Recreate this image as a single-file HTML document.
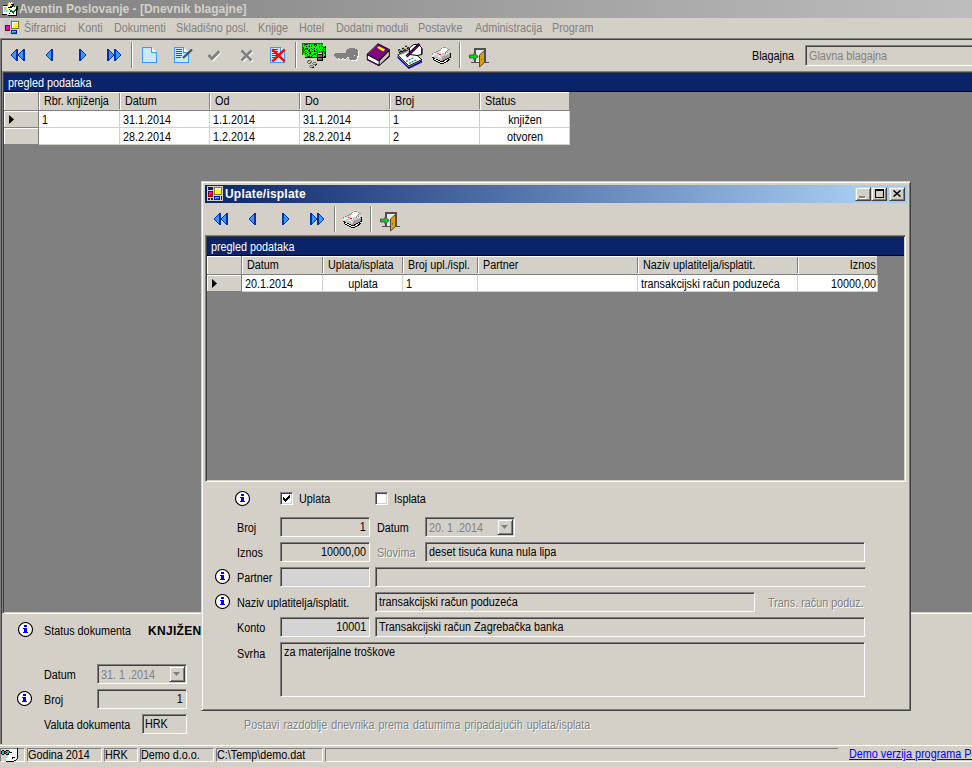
<!DOCTYPE html><html><head><meta charset="utf-8"><style>
html,body{margin:0;padding:0;}
body{width:972px;height:768px;overflow:hidden;position:relative;background:#d4d0c8;font-family:"Liberation Sans",sans-serif;}
body div, body svg{position:absolute;box-sizing:content-box;}
.t{white-space:nowrap;font-size:12px;line-height:13px;color:#000;transform:scaleX(0.9);transform-origin:0 0;}
.b{white-space:nowrap;font-size:12px;line-height:13px;font-weight:bold;color:#000;}
.r{transform-origin:100% 0;}
.c{transform-origin:50% 0;}
.e{color:#808080;text-shadow:1px 1px 0 #fff;}
</style></head><body>
<div style="left:0px;top:0px;width:972px;height:18px;background:linear-gradient(to right,#808080 0px,#c0c0c0 1018px);background-size:1018px 18px;background-repeat:no-repeat"></div>
<div class="b" style="left:19px;top:3px;color:#d4d0c8">Aventin Poslovanje - [Dnevnik blagajne]</div>
<div class="t" style="left:24px;top:22px;color:#808080">Šifrarnici</div>
<div class="t" style="left:78px;top:22px;color:#808080">Konti</div>
<div class="t" style="left:114px;top:22px;color:#808080">Dokumenti</div>
<div class="t" style="left:176px;top:22px;color:#808080">Skladišno posl.</div>
<div class="t" style="left:258px;top:22px;color:#808080">Knjige</div>
<div class="t" style="left:299px;top:22px;color:#808080">Hotel</div>
<div class="t" style="left:336px;top:22px;color:#808080">Dodatni moduli</div>
<div class="t" style="left:418px;top:22px;color:#808080">Postavke</div>
<div class="t" style="left:475px;top:22px;color:#808080">Administracija</div>
<div class="t" style="left:552px;top:22px;color:#808080">Program</div>
<div style="left:0px;top:38px;width:972px;height:1px;background:#808080"></div>
<div style="left:0px;top:39px;width:972px;height:1px;background:#404040"></div>
<div style="left:0px;top:38px;width:1px;height:707px;background:#808080"></div>
<div style="left:1px;top:39px;width:1px;height:706px;background:#404040"></div>
<div style="left:0px;top:744px;width:972px;height:1px;background:#d4d0c8"></div>
<div style="left:0px;top:745px;width:972px;height:1px;background:#ffffff"></div>
<div style="left:131px;top:42px;width:1px;height:26px;background:#808080"></div>
<div style="left:132px;top:42px;width:1px;height:26px;background:#ffffff"></div>
<div style="left:295px;top:42px;width:1px;height:26px;background:#808080"></div>
<div style="left:296px;top:42px;width:1px;height:26px;background:#ffffff"></div>
<div style="left:459px;top:42px;width:1px;height:26px;background:#808080"></div>
<div style="left:460px;top:42px;width:1px;height:26px;background:#ffffff"></div>
<div class="t" style="left:752px;top:50px;">Blagajna</div>
<div style="left:805px;top:45px;width:198px;height:19px;background:#d4d0c8;border:1px solid;border-color:#808080 #ffffff #ffffff #808080;box-shadow:inset 1px 1px #404040,inset -1px -1px #d4d0c8;"></div>
<div class="t" style="left:809px;top:50px;color:#808080">Glavna blagajna</div>
<div style="left:2px;top:71px;width:978px;height:541px;background:#808080;border:1px solid;border-color:#808080 #ffffff #ffffff #808080;box-shadow:inset 1px 1px #404040,inset -1px -1px #d4d0c8;"></div>
<div style="left:4px;top:73px;width:968px;height:18px;background:#0a246a"></div>
<div style="left:4px;top:91px;width:968px;height:1px;background:#000"></div>
<div class="t" style="left:8px;top:77px;color:#fff">pregled podataka</div>
<div style="left:4px;top:92px;width:34px;height:18px;background:#d4d0c8;border-top:1px solid #ffffff;border-left:1px solid #ffffff;box-sizing:border-box"></div>
<div style="left:38px;top:92px;width:1px;height:19px;background:#808080"></div>
<div style="left:4px;top:110px;width:566px;height:1px;background:#808080"></div>
<div style="left:39px;top:92px;width:81px;height:18px;background:#d4d0c8;border-top:1px solid #ffffff;border-left:1px solid #ffffff;box-sizing:border-box"></div>
<div style="left:119px;top:93px;width:1px;height:16px;background:#808080"></div>
<div class="t" style="left:44px;top:95px;">Rbr. knjiženja</div>
<div style="left:120px;top:92px;width:90px;height:18px;background:#d4d0c8;border-top:1px solid #ffffff;border-left:1px solid #ffffff;box-sizing:border-box"></div>
<div style="left:209px;top:93px;width:1px;height:16px;background:#808080"></div>
<div class="t" style="left:125px;top:95px;">Datum</div>
<div style="left:210px;top:92px;width:90px;height:18px;background:#d4d0c8;border-top:1px solid #ffffff;border-left:1px solid #ffffff;box-sizing:border-box"></div>
<div style="left:299px;top:93px;width:1px;height:16px;background:#808080"></div>
<div class="t" style="left:215px;top:95px;">Od</div>
<div style="left:300px;top:92px;width:90px;height:18px;background:#d4d0c8;border-top:1px solid #ffffff;border-left:1px solid #ffffff;box-sizing:border-box"></div>
<div style="left:389px;top:93px;width:1px;height:16px;background:#808080"></div>
<div class="t" style="left:305px;top:95px;">Do</div>
<div style="left:390px;top:92px;width:90px;height:18px;background:#d4d0c8;border-top:1px solid #ffffff;border-left:1px solid #ffffff;box-sizing:border-box"></div>
<div style="left:479px;top:93px;width:1px;height:16px;background:#808080"></div>
<div class="t" style="left:395px;top:95px;">Broj</div>
<div style="left:480px;top:92px;width:89px;height:18px;background:#d4d0c8;border-top:1px solid #ffffff;border-left:1px solid #ffffff;box-sizing:border-box"></div>
<div class="t" style="left:485px;top:95px;">Status</div>
<div style="left:4px;top:111px;width:34px;height:16px;background:#d4d0c8;border-top:1px solid #ffffff;border-left:1px solid #ffffff;box-sizing:border-box"></div>
<div style="left:38px;top:111px;width:1px;height:17px;background:#808080"></div>
<div style="left:4px;top:127px;width:35px;height:1px;background:#808080"></div>
<svg style="position:absolute;left:9px;top:115px" width="5" height="9" viewBox="0 0 5 9" shape-rendering="crispEdges"><path d="M0 0L5 4.5L0 9Z" fill="#000" shape-rendering="auto"/></svg>
<div style="left:39px;top:111px;width:531px;height:16px;background:#fff"></div>
<div style="left:39px;top:127px;width:531px;height:1px;background:#d4d0c8"></div>
<div style="left:119px;top:111px;width:1px;height:17px;background:#d4d0c8"></div>
<div class="t" style="left:42px;top:114px;">1</div>
<div style="left:209px;top:111px;width:1px;height:17px;background:#d4d0c8"></div>
<div class="t" style="left:123px;top:114px;">31.1.2014</div>
<div style="left:299px;top:111px;width:1px;height:17px;background:#d4d0c8"></div>
<div class="t" style="left:213px;top:114px;">1.1.2014</div>
<div style="left:389px;top:111px;width:1px;height:17px;background:#d4d0c8"></div>
<div class="t" style="left:303px;top:114px;">31.1.2014</div>
<div style="left:479px;top:111px;width:1px;height:17px;background:#d4d0c8"></div>
<div class="t" style="left:393px;top:114px;">1</div>
<div style="left:569px;top:111px;width:1px;height:17px;background:#d4d0c8"></div>
<div class="t c" style="left:424.5px;width:200px;top:114px;text-align:center;">knjižen</div>
<div style="left:4px;top:128px;width:34px;height:16px;background:#d4d0c8;border-top:1px solid #ffffff;border-left:1px solid #ffffff;box-sizing:border-box"></div>
<div style="left:38px;top:128px;width:1px;height:17px;background:#808080"></div>
<div style="left:4px;top:144px;width:35px;height:1px;background:#808080"></div>
<div style="left:39px;top:128px;width:531px;height:16px;background:#fff"></div>
<div style="left:39px;top:144px;width:531px;height:1px;background:#d4d0c8"></div>
<div style="left:119px;top:128px;width:1px;height:17px;background:#d4d0c8"></div>
<div style="left:209px;top:128px;width:1px;height:17px;background:#d4d0c8"></div>
<div class="t" style="left:123px;top:131px;">28.2.2014</div>
<div style="left:299px;top:128px;width:1px;height:17px;background:#d4d0c8"></div>
<div class="t" style="left:213px;top:131px;">1.2.2014</div>
<div style="left:389px;top:128px;width:1px;height:17px;background:#d4d0c8"></div>
<div class="t" style="left:303px;top:131px;">28.2.2014</div>
<div style="left:479px;top:128px;width:1px;height:17px;background:#d4d0c8"></div>
<div class="t" style="left:393px;top:131px;">2</div>
<div style="left:569px;top:128px;width:1px;height:17px;background:#d4d0c8"></div>
<div class="t c" style="left:424.5px;width:200px;top:131px;text-align:center;">otvoren</div>
<svg style="position:absolute;left:0px;top:0px" width="18" height="17" viewBox="0 0 18 17" shape-rendering="crispEdges"><rect x="9" y="2" width="1" height="1" fill="#ffff00"/><rect x="11" y="2" width="1" height="1" fill="#ffffff"/><rect x="8" y="3" width="2" height="1" fill="#ffff00"/><rect x="10" y="3" width="3" height="1" fill="#ffffff"/><rect x="8" y="4" width="1" height="1" fill="#ffff00"/><rect x="9" y="4" width="2" height="1" fill="#ffffff"/><rect x="11" y="4" width="3" height="1" fill="#000000"/><rect x="3" y="5" width="1" height="1" fill="#0000ff"/><rect x="4" y="5" width="1" height="1" fill="#000000"/><rect x="5" y="5" width="1" height="1" fill="#0000ff"/><rect x="6" y="5" width="1" height="1" fill="#000000"/><rect x="8" y="5" width="1" height="1" fill="#ffff00"/><rect x="9" y="5" width="3" height="1" fill="#ffffff"/><rect x="12" y="5" width="2" height="1" fill="#000000"/><rect x="3" y="6" width="7" height="1" fill="#ffffff"/><rect x="10" y="6" width="3" height="1" fill="#000000"/><rect x="14" y="6" width="1" height="1" fill="#008000"/><rect x="15" y="6" width="1" height="1" fill="#ffff00"/><rect x="16" y="6" width="1" height="1" fill="#008000"/><rect x="17" y="6" width="1" height="1" fill="#000000"/><rect x="3" y="7" width="1" height="1" fill="#ffffff"/><rect x="4" y="7" width="3" height="1" fill="#c0c0c0"/><rect x="7" y="7" width="1" height="1" fill="#ffffff"/><rect x="8" y="7" width="4" height="1" fill="#000000"/><rect x="12" y="7" width="4" height="1" fill="#ffffff"/><rect x="16" y="7" width="1" height="1" fill="#000000"/><rect x="17" y="7" width="1" height="1" fill="#c00000"/><rect x="3" y="8" width="1" height="1" fill="#ffffff"/><rect x="4" y="8" width="1" height="1" fill="#c0c0c0"/><rect x="5" y="8" width="1" height="1" fill="#00ffff"/><rect x="6" y="8" width="1" height="1" fill="#ffff00"/><rect x="7" y="8" width="9" height="1" fill="#ffffff"/><rect x="16" y="8" width="2" height="1" fill="#000000"/><rect x="3" y="9" width="1" height="1" fill="#ffffff"/><rect x="4" y="9" width="1" height="1" fill="#c0c0c0"/><rect x="5" y="9" width="1" height="1" fill="#00ffff"/><rect x="6" y="9" width="1" height="1" fill="#ffff00"/><rect x="7" y="9" width="2" height="1" fill="#ffffff"/><rect x="9" y="9" width="1" height="1" fill="#000000"/><rect x="10" y="9" width="5" height="1" fill="#ffffff"/><rect x="15" y="9" width="1" height="1" fill="#008000"/><rect x="16" y="9" width="2" height="1" fill="#000000"/><rect x="3" y="10" width="1" height="1" fill="#ffffff"/><rect x="4" y="10" width="1" height="1" fill="#c0c0c0"/><rect x="5" y="10" width="1" height="1" fill="#ffff00"/><rect x="6" y="10" width="1" height="1" fill="#00ffff"/><rect x="7" y="10" width="3" height="1" fill="#ffffff"/><rect x="10" y="10" width="2" height="1" fill="#008000"/><rect x="12" y="10" width="2" height="1" fill="#ffffff"/><rect x="14" y="10" width="2" height="1" fill="#008000"/><rect x="16" y="10" width="1" height="1" fill="#000000"/><rect x="3" y="11" width="1" height="1" fill="#ffffff"/><rect x="4" y="11" width="1" height="1" fill="#c0c0c0"/><rect x="5" y="11" width="1" height="1" fill="#ffff00"/><rect x="6" y="11" width="1" height="1" fill="#00ffff"/><rect x="7" y="11" width="3" height="1" fill="#ffffff"/><rect x="10" y="11" width="1" height="1" fill="#000000"/><rect x="11" y="11" width="4" height="1" fill="#008000"/><rect x="15" y="11" width="1" height="1" fill="#ffffff"/><rect x="16" y="11" width="1" height="1" fill="#000000"/><rect x="3" y="12" width="9" height="1" fill="#ffffff"/><rect x="12" y="12" width="2" height="1" fill="#008000"/><rect x="14" y="12" width="2" height="1" fill="#ffffff"/><rect x="16" y="12" width="1" height="1" fill="#000000"/><rect x="3" y="13" width="6" height="1" fill="#ffffff"/><rect x="9" y="13" width="1" height="1" fill="#000000"/><rect x="10" y="13" width="3" height="1" fill="#ffffff"/><rect x="13" y="13" width="1" height="1" fill="#008000"/><rect x="14" y="13" width="2" height="1" fill="#ffffff"/><rect x="16" y="13" width="1" height="1" fill="#000000"/><rect x="2" y="14" width="5" height="1" fill="#000000"/><rect x="7" y="14" width="9" height="1" fill="#ffffff"/><rect x="16" y="14" width="1" height="1" fill="#000000"/><rect x="8" y="15" width="9" height="1" fill="#000000"/></svg>
<svg style="position:absolute;left:4px;top:20px" width="16" height="15" viewBox="0 0 16 15" shape-rendering="crispEdges"><rect x="0" y="0" width="16" height="1" fill="#c4c4cc"/><rect x="0" y="1" width="1" height="1" fill="#c4c4cc"/><rect x="3" y="1" width="1" height="1" fill="#c4c4cc"/><rect x="6" y="1" width="1" height="1" fill="#c4c4cc"/><rect x="7" y="1" width="8" height="1" fill="#808000"/><rect x="15" y="1" width="1" height="1" fill="#c4c4cc"/><rect x="0" y="2" width="1" height="1" fill="#c4c4cc"/><rect x="3" y="2" width="1" height="1" fill="#c4c4cc"/><rect x="6" y="2" width="1" height="1" fill="#c4c4cc"/><rect x="7" y="2" width="1" height="1" fill="#808000"/><rect x="8" y="2" width="6" height="1" fill="#ffffff"/><rect x="14" y="2" width="1" height="1" fill="#808000"/><rect x="15" y="2" width="1" height="1" fill="#c4c4cc"/><rect x="0" y="3" width="7" height="1" fill="#c4c4cc"/><rect x="7" y="3" width="1" height="1" fill="#808000"/><rect x="8" y="3" width="1" height="1" fill="#ffffff"/><rect x="9" y="3" width="5" height="1" fill="#ffff00"/><rect x="14" y="3" width="1" height="1" fill="#808000"/><rect x="15" y="3" width="1" height="1" fill="#c4c4cc"/><rect x="0" y="4" width="1" height="1" fill="#c4c4cc"/><rect x="3" y="4" width="1" height="1" fill="#c4c4cc"/><rect x="6" y="4" width="1" height="1" fill="#c4c4cc"/><rect x="7" y="4" width="1" height="1" fill="#808000"/><rect x="8" y="4" width="1" height="1" fill="#ffffff"/><rect x="9" y="4" width="5" height="1" fill="#ffff00"/><rect x="14" y="4" width="1" height="1" fill="#808000"/><rect x="15" y="4" width="1" height="1" fill="#c4c4cc"/><rect x="0" y="5" width="1" height="1" fill="#c4c4cc"/><rect x="1" y="5" width="5" height="1" fill="#800000"/><rect x="6" y="5" width="1" height="1" fill="#c4c4cc"/><rect x="7" y="5" width="1" height="1" fill="#808000"/><rect x="8" y="5" width="1" height="1" fill="#ffffff"/><rect x="9" y="5" width="5" height="1" fill="#ffff00"/><rect x="14" y="5" width="1" height="1" fill="#808000"/><rect x="15" y="5" width="1" height="1" fill="#c4c4cc"/><rect x="0" y="6" width="1" height="1" fill="#c4c4cc"/><rect x="1" y="6" width="1" height="1" fill="#800000"/><rect x="2" y="6" width="3" height="1" fill="#ff00ff"/><rect x="5" y="6" width="1" height="1" fill="#800000"/><rect x="6" y="6" width="1" height="1" fill="#c4c4cc"/><rect x="7" y="6" width="1" height="1" fill="#808000"/><rect x="8" y="6" width="1" height="1" fill="#ffffff"/><rect x="9" y="6" width="5" height="1" fill="#ffff00"/><rect x="14" y="6" width="1" height="1" fill="#808000"/><rect x="15" y="6" width="1" height="1" fill="#c4c4cc"/><rect x="0" y="7" width="1" height="1" fill="#c4c4cc"/><rect x="1" y="7" width="1" height="1" fill="#800000"/><rect x="2" y="7" width="1" height="1" fill="#ff00ff"/><rect x="3" y="7" width="2" height="1" fill="#ff0000"/><rect x="5" y="7" width="1" height="1" fill="#800000"/><rect x="6" y="7" width="1" height="1" fill="#c4c4cc"/><rect x="7" y="7" width="1" height="1" fill="#808000"/><rect x="8" y="7" width="1" height="1" fill="#ffffff"/><rect x="9" y="7" width="5" height="1" fill="#ffff00"/><rect x="14" y="7" width="1" height="1" fill="#808000"/><rect x="15" y="7" width="1" height="1" fill="#c4c4cc"/><rect x="0" y="8" width="1" height="1" fill="#c4c4cc"/><rect x="1" y="8" width="1" height="1" fill="#800000"/><rect x="2" y="8" width="1" height="1" fill="#ff00ff"/><rect x="3" y="8" width="2" height="1" fill="#ff0000"/><rect x="5" y="8" width="1" height="1" fill="#800000"/><rect x="6" y="8" width="1" height="1" fill="#c4c4cc"/><rect x="7" y="8" width="8" height="1" fill="#808000"/><rect x="15" y="8" width="1" height="1" fill="#c4c4cc"/><rect x="0" y="9" width="1" height="1" fill="#c4c4cc"/><rect x="1" y="9" width="1" height="1" fill="#800000"/><rect x="2" y="9" width="1" height="1" fill="#ff00ff"/><rect x="3" y="9" width="2" height="1" fill="#ff0000"/><rect x="5" y="9" width="1" height="1" fill="#800000"/><rect x="6" y="9" width="1" height="1" fill="#c4c4cc"/><rect x="14" y="9" width="1" height="1" fill="#e8e4d0"/><rect x="15" y="9" width="1" height="1" fill="#c4c4cc"/><rect x="0" y="10" width="1" height="1" fill="#c4c4cc"/><rect x="1" y="10" width="5" height="1" fill="#800000"/><rect x="6" y="10" width="1" height="1" fill="#c4c4cc"/><rect x="7" y="10" width="6" height="1" fill="#0000ff"/><rect x="13" y="10" width="2" height="1" fill="#e8e4d0"/><rect x="15" y="10" width="1" height="1" fill="#c4c4cc"/><rect x="0" y="11" width="1" height="1" fill="#c4c4cc"/><rect x="3" y="11" width="1" height="1" fill="#c4c4cc"/><rect x="6" y="11" width="1" height="1" fill="#c4c4cc"/><rect x="7" y="11" width="1" height="1" fill="#0000ff"/><rect x="8" y="11" width="4" height="1" fill="#00ffff"/><rect x="12" y="11" width="1" height="1" fill="#0000ff"/><rect x="13" y="11" width="2" height="1" fill="#e8e4d0"/><rect x="15" y="11" width="1" height="1" fill="#c4c4cc"/><rect x="0" y="12" width="7" height="1" fill="#c4c4cc"/><rect x="7" y="12" width="1" height="1" fill="#0000ff"/><rect x="8" y="12" width="1" height="1" fill="#00ffff"/><rect x="9" y="12" width="3" height="1" fill="#008080"/><rect x="12" y="12" width="1" height="1" fill="#0000ff"/><rect x="13" y="12" width="2" height="1" fill="#e8e4d0"/><rect x="15" y="12" width="1" height="1" fill="#c4c4cc"/><rect x="0" y="13" width="1" height="1" fill="#c4c4cc"/><rect x="3" y="13" width="1" height="1" fill="#c4c4cc"/><rect x="6" y="13" width="1" height="1" fill="#c4c4cc"/><rect x="7" y="13" width="6" height="1" fill="#0000ff"/><rect x="13" y="13" width="2" height="1" fill="#e8e4d0"/><rect x="15" y="13" width="1" height="1" fill="#c4c4cc"/><rect x="0" y="14" width="16" height="1" fill="#c4c4cc"/></svg>
<svg style="position:absolute;left:11px;top:49px" width="14" height="12" viewBox="0 0 14 12" shape-rendering="crispEdges"><rect x="5" y="0" width="1" height="1" fill="#0030b0"/><rect x="4" y="1" width="1" height="1" fill="#0030b0"/><rect x="3" y="2" width="1" height="1" fill="#0030b0"/><rect x="4" y="2" width="1" height="1" fill="#3399ff"/><rect x="2" y="3" width="1" height="1" fill="#0030b0"/><rect x="3" y="3" width="2" height="1" fill="#3399ff"/><rect x="1" y="4" width="1" height="1" fill="#0030b0"/><rect x="2" y="4" width="3" height="1" fill="#3399ff"/><rect x="0" y="5" width="1" height="1" fill="#0030b0"/><rect x="1" y="5" width="4" height="1" fill="#3399ff"/><rect x="0" y="6" width="1" height="1" fill="#0030b0"/><rect x="1" y="6" width="4" height="1" fill="#3399ff"/><rect x="1" y="7" width="1" height="1" fill="#0030b0"/><rect x="2" y="7" width="3" height="1" fill="#3399ff"/><rect x="2" y="8" width="1" height="1" fill="#0030b0"/><rect x="3" y="8" width="2" height="1" fill="#3399ff"/><rect x="3" y="9" width="1" height="1" fill="#0030b0"/><rect x="4" y="9" width="1" height="1" fill="#3399ff"/><rect x="4" y="10" width="1" height="1" fill="#0030b0"/><rect x="5" y="11" width="1" height="1" fill="#0030b0"/><rect x="5" y="0" width="2" height="12" fill="#0030b0"/><rect x="12" y="0" width="1" height="1" fill="#0030b0"/><rect x="11" y="1" width="1" height="1" fill="#0030b0"/><rect x="10" y="2" width="1" height="1" fill="#0030b0"/><rect x="11" y="2" width="1" height="1" fill="#3399ff"/><rect x="9" y="3" width="1" height="1" fill="#0030b0"/><rect x="10" y="3" width="2" height="1" fill="#3399ff"/><rect x="8" y="4" width="1" height="1" fill="#0030b0"/><rect x="9" y="4" width="3" height="1" fill="#3399ff"/><rect x="7" y="5" width="1" height="1" fill="#0030b0"/><rect x="8" y="5" width="4" height="1" fill="#3399ff"/><rect x="7" y="6" width="1" height="1" fill="#0030b0"/><rect x="8" y="6" width="4" height="1" fill="#3399ff"/><rect x="8" y="7" width="1" height="1" fill="#0030b0"/><rect x="9" y="7" width="3" height="1" fill="#3399ff"/><rect x="9" y="8" width="1" height="1" fill="#0030b0"/><rect x="10" y="8" width="2" height="1" fill="#3399ff"/><rect x="10" y="9" width="1" height="1" fill="#0030b0"/><rect x="11" y="9" width="1" height="1" fill="#3399ff"/><rect x="11" y="10" width="1" height="1" fill="#0030b0"/><rect x="12" y="11" width="1" height="1" fill="#0030b0"/><rect x="12" y="0" width="2" height="12" fill="#0030b0"/></svg>
<svg style="position:absolute;left:46px;top:49px" width="7" height="12" viewBox="0 0 7 12" shape-rendering="crispEdges"><rect x="5" y="0" width="1" height="1" fill="#0030b0"/><rect x="4" y="1" width="1" height="1" fill="#0030b0"/><rect x="3" y="2" width="1" height="1" fill="#0030b0"/><rect x="4" y="2" width="1" height="1" fill="#3399ff"/><rect x="2" y="3" width="1" height="1" fill="#0030b0"/><rect x="3" y="3" width="2" height="1" fill="#3399ff"/><rect x="1" y="4" width="1" height="1" fill="#0030b0"/><rect x="2" y="4" width="3" height="1" fill="#3399ff"/><rect x="0" y="5" width="1" height="1" fill="#0030b0"/><rect x="1" y="5" width="4" height="1" fill="#3399ff"/><rect x="0" y="6" width="1" height="1" fill="#0030b0"/><rect x="1" y="6" width="4" height="1" fill="#3399ff"/><rect x="1" y="7" width="1" height="1" fill="#0030b0"/><rect x="2" y="7" width="3" height="1" fill="#3399ff"/><rect x="2" y="8" width="1" height="1" fill="#0030b0"/><rect x="3" y="8" width="2" height="1" fill="#3399ff"/><rect x="3" y="9" width="1" height="1" fill="#0030b0"/><rect x="4" y="9" width="1" height="1" fill="#3399ff"/><rect x="4" y="10" width="1" height="1" fill="#0030b0"/><rect x="5" y="11" width="1" height="1" fill="#0030b0"/><rect x="5" y="0" width="2" height="12" fill="#0030b0"/></svg>
<svg style="position:absolute;left:79px;top:49px" width="7" height="12" viewBox="0 0 7 12" shape-rendering="crispEdges"><rect x="1" y="0" width="1" height="1" fill="#0030b0"/><rect x="2" y="1" width="1" height="1" fill="#0030b0"/><rect x="3" y="2" width="1" height="1" fill="#0030b0"/><rect x="2" y="2" width="1" height="1" fill="#3399ff"/><rect x="4" y="3" width="1" height="1" fill="#0030b0"/><rect x="2" y="3" width="2" height="1" fill="#3399ff"/><rect x="5" y="4" width="1" height="1" fill="#0030b0"/><rect x="2" y="4" width="3" height="1" fill="#3399ff"/><rect x="6" y="5" width="1" height="1" fill="#0030b0"/><rect x="2" y="5" width="4" height="1" fill="#3399ff"/><rect x="6" y="6" width="1" height="1" fill="#0030b0"/><rect x="2" y="6" width="4" height="1" fill="#3399ff"/><rect x="5" y="7" width="1" height="1" fill="#0030b0"/><rect x="2" y="7" width="3" height="1" fill="#3399ff"/><rect x="4" y="8" width="1" height="1" fill="#0030b0"/><rect x="2" y="8" width="2" height="1" fill="#3399ff"/><rect x="3" y="9" width="1" height="1" fill="#0030b0"/><rect x="2" y="9" width="1" height="1" fill="#3399ff"/><rect x="2" y="10" width="1" height="1" fill="#0030b0"/><rect x="1" y="11" width="1" height="1" fill="#0030b0"/><rect x="0" y="0" width="2" height="12" fill="#0030b0"/></svg>
<svg style="position:absolute;left:107px;top:49px" width="14" height="12" viewBox="0 0 14 12" shape-rendering="crispEdges"><rect x="1" y="0" width="1" height="1" fill="#0030b0"/><rect x="2" y="1" width="1" height="1" fill="#0030b0"/><rect x="3" y="2" width="1" height="1" fill="#0030b0"/><rect x="2" y="2" width="1" height="1" fill="#3399ff"/><rect x="4" y="3" width="1" height="1" fill="#0030b0"/><rect x="2" y="3" width="2" height="1" fill="#3399ff"/><rect x="5" y="4" width="1" height="1" fill="#0030b0"/><rect x="2" y="4" width="3" height="1" fill="#3399ff"/><rect x="6" y="5" width="1" height="1" fill="#0030b0"/><rect x="2" y="5" width="4" height="1" fill="#3399ff"/><rect x="6" y="6" width="1" height="1" fill="#0030b0"/><rect x="2" y="6" width="4" height="1" fill="#3399ff"/><rect x="5" y="7" width="1" height="1" fill="#0030b0"/><rect x="2" y="7" width="3" height="1" fill="#3399ff"/><rect x="4" y="8" width="1" height="1" fill="#0030b0"/><rect x="2" y="8" width="2" height="1" fill="#3399ff"/><rect x="3" y="9" width="1" height="1" fill="#0030b0"/><rect x="2" y="9" width="1" height="1" fill="#3399ff"/><rect x="2" y="10" width="1" height="1" fill="#0030b0"/><rect x="1" y="11" width="1" height="1" fill="#0030b0"/><rect x="0" y="0" width="2" height="12" fill="#0030b0"/><rect x="8" y="0" width="1" height="1" fill="#0030b0"/><rect x="9" y="1" width="1" height="1" fill="#0030b0"/><rect x="10" y="2" width="1" height="1" fill="#0030b0"/><rect x="9" y="2" width="1" height="1" fill="#3399ff"/><rect x="11" y="3" width="1" height="1" fill="#0030b0"/><rect x="9" y="3" width="2" height="1" fill="#3399ff"/><rect x="12" y="4" width="1" height="1" fill="#0030b0"/><rect x="9" y="4" width="3" height="1" fill="#3399ff"/><rect x="13" y="5" width="1" height="1" fill="#0030b0"/><rect x="9" y="5" width="4" height="1" fill="#3399ff"/><rect x="13" y="6" width="1" height="1" fill="#0030b0"/><rect x="9" y="6" width="4" height="1" fill="#3399ff"/><rect x="12" y="7" width="1" height="1" fill="#0030b0"/><rect x="9" y="7" width="3" height="1" fill="#3399ff"/><rect x="11" y="8" width="1" height="1" fill="#0030b0"/><rect x="9" y="8" width="2" height="1" fill="#3399ff"/><rect x="10" y="9" width="1" height="1" fill="#0030b0"/><rect x="9" y="9" width="1" height="1" fill="#3399ff"/><rect x="9" y="10" width="1" height="1" fill="#0030b0"/><rect x="8" y="11" width="1" height="1" fill="#0030b0"/><rect x="7" y="0" width="2" height="12" fill="#0030b0"/></svg>
<svg style="position:absolute;left:142px;top:47px" width="15" height="16" viewBox="0 0 15 16" shape-rendering="crispEdges"><path d="M0.5 0.5H9.5L14.5 5.5V15.5H0.5Z" fill="#cce8ff" stroke="#3399ff"/><path d="M9.5 0.5V5.5H14.5" fill="#ffffff" stroke="#3399ff"/></svg>
<svg style="position:absolute;left:174px;top:47px" width="20" height="16" viewBox="0 0 20 16" shape-rendering="crispEdges"><path d="M0.5 0.5H9.5L14.5 5.5V15.5H0.5Z" fill="#cce8ff" stroke="#3399ff"/><path d="M9.5 0.5V5.5H14.5" fill="#ffffff" stroke="#3399ff"/><rect x="2" y="2" width="6" height="1" fill="#505050"/><rect x="2" y="4" width="6" height="1" fill="#505050"/><rect x="2" y="6" width="6" height="1" fill="#505050"/><rect x="2" y="8" width="6" height="1" fill="#505050"/><rect x="2" y="10" width="5" height="1" fill="#505050"/><path d="M9 11L18 2.5" stroke="#505050" stroke-width="2.4" shape-rendering="geometricPrecision"/></svg>
<svg style="position:absolute;left:207px;top:49px" width="14" height="13" viewBox="0 0 14 13" shape-rendering="crispEdges"><g shape-rendering="geometricPrecision" fill="none" stroke-width="2.8" stroke-linecap="butt"><path d="M1.5 6L5 9.8L12.3 2.3" stroke="#ffffff" transform="translate(1,1)"/><path d="M1.5 6L5 9.8L12.3 2.3" stroke="#808080"/></g></svg>
<svg style="position:absolute;left:240px;top:49px" width="14" height="14" viewBox="0 0 14 14" shape-rendering="crispEdges"><g shape-rendering="geometricPrecision" fill="none" stroke-width="2.5" stroke-linecap="butt"><path d="M1.5 1.5L11.5 11.5M11.5 1.5L1.5 11.5" stroke="#ffffff" transform="translate(1,1)"/><path d="M1.5 1.5L11.5 11.5M11.5 1.5L1.5 11.5" stroke="#808080"/></g></svg>
<svg style="position:absolute;left:270px;top:47px" width="16" height="16" viewBox="0 0 16 16" shape-rendering="crispEdges"><path d="M0.5 0.5H10.5L14.5 4.5V15.5H0.5Z" fill="#cce8ff" stroke="#3399ff"/><path d="M10.5 0.5V4.5H14.5" fill="#ffffff" stroke="#3399ff"/><rect x="2" y="2" width="6" height="1" fill="#505050"/><rect x="2" y="4" width="6" height="1" fill="#505050"/><rect x="2" y="6" width="6" height="1" fill="#505050"/><rect x="2" y="8" width="6" height="1" fill="#505050"/><rect x="2" y="10" width="6" height="1" fill="#505050"/><path d="M2.3 2.3L14.7 14.3M14.7 2.3L2.3 14.3" stroke="#ff0000" stroke-width="2.4" shape-rendering="geometricPrecision"/></svg>
<svg style="position:absolute;left:301px;top:42px" width="26" height="26" viewBox="0 0 26 26" shape-rendering="crispEdges"><rect x="1" y="1" width="21" height="1" fill="#008000"/><rect x="1" y="2" width="1" height="1" fill="#008000"/><rect x="2" y="2" width="1" height="1" fill="#00ff00"/><rect x="3" y="2" width="1" height="1" fill="#008000"/><rect x="4" y="2" width="2" height="1" fill="#000000"/><rect x="6" y="2" width="1" height="1" fill="#008000"/><rect x="7" y="2" width="1" height="1" fill="#00ff00"/><rect x="8" y="2" width="1" height="1" fill="#008000"/><rect x="9" y="2" width="4" height="1" fill="#00ff00"/><rect x="13" y="2" width="2" height="1" fill="#000000"/><rect x="15" y="2" width="1" height="1" fill="#008000"/><rect x="16" y="2" width="2" height="1" fill="#00ff00"/><rect x="18" y="2" width="1" height="1" fill="#008000"/><rect x="19" y="2" width="2" height="1" fill="#00ff00"/><rect x="21" y="2" width="1" height="1" fill="#008000"/><rect x="1" y="3" width="1" height="1" fill="#008000"/><rect x="2" y="3" width="1" height="1" fill="#00ff00"/><rect x="3" y="3" width="1" height="1" fill="#008000"/><rect x="4" y="3" width="4" height="1" fill="#00ff00"/><rect x="8" y="3" width="1" height="1" fill="#008000"/><rect x="9" y="3" width="1" height="1" fill="#a0a0a0"/><rect x="10" y="3" width="1" height="1" fill="#000000"/><rect x="11" y="3" width="2" height="1" fill="#00ff00"/><rect x="13" y="3" width="1" height="1" fill="#008000"/><rect x="14" y="3" width="1" height="1" fill="#00ff00"/><rect x="15" y="3" width="1" height="1" fill="#000000"/><rect x="16" y="3" width="1" height="1" fill="#a0a0a0"/><rect x="17" y="3" width="3" height="1" fill="#00ff00"/><rect x="20" y="3" width="1" height="1" fill="#008000"/><rect x="21" y="3" width="1" height="1" fill="#00ff00"/><rect x="1" y="4" width="1" height="1" fill="#008000"/><rect x="2" y="4" width="3" height="1" fill="#00ff00"/><rect x="5" y="4" width="1" height="1" fill="#000000"/><rect x="6" y="4" width="1" height="1" fill="#00ff00"/><rect x="7" y="4" width="1" height="1" fill="#008000"/><rect x="8" y="4" width="1" height="1" fill="#000000"/><rect x="9" y="4" width="1" height="1" fill="#a0a0a0"/><rect x="10" y="4" width="1" height="1" fill="#008000"/><rect x="11" y="4" width="3" height="1" fill="#00ff00"/><rect x="14" y="4" width="1" height="1" fill="#008000"/><rect x="15" y="4" width="1" height="1" fill="#00ff00"/><rect x="16" y="4" width="1" height="1" fill="#a0a0a0"/><rect x="17" y="4" width="1" height="1" fill="#00ff00"/><rect x="18" y="4" width="1" height="1" fill="#000000"/><rect x="19" y="4" width="1" height="1" fill="#00ff00"/><rect x="20" y="4" width="2" height="1" fill="#008000"/><rect x="22" y="4" width="2" height="1" fill="#00ff00"/><rect x="24" y="4" width="1" height="1" fill="#000000"/><rect x="1" y="5" width="2" height="1" fill="#008000"/><rect x="3" y="5" width="15" height="1" fill="#00ff00"/><rect x="18" y="5" width="1" height="1" fill="#008000"/><rect x="19" y="5" width="3" height="1" fill="#00ff00"/><rect x="22" y="5" width="3" height="1" fill="#000000"/><rect x="1" y="6" width="1" height="1" fill="#008000"/><rect x="2" y="6" width="1" height="1" fill="#000000"/><rect x="3" y="6" width="1" height="1" fill="#00ff00"/><rect x="4" y="6" width="1" height="1" fill="#000000"/><rect x="5" y="6" width="1" height="1" fill="#008000"/><rect x="6" y="6" width="1" height="1" fill="#000000"/><rect x="7" y="6" width="1" height="1" fill="#a0a0a0"/><rect x="8" y="6" width="2" height="1" fill="#00ff00"/><rect x="10" y="6" width="1" height="1" fill="#000000"/><rect x="11" y="6" width="2" height="1" fill="#00ff00"/><rect x="13" y="6" width="1" height="1" fill="#000000"/><rect x="14" y="6" width="2" height="1" fill="#00ff00"/><rect x="16" y="6" width="1" height="1" fill="#008000"/><rect x="17" y="6" width="5" height="1" fill="#00ff00"/><rect x="22" y="6" width="1" height="1" fill="#000000"/><rect x="23" y="6" width="1" height="1" fill="#00ff00"/><rect x="24" y="6" width="1" height="1" fill="#000000"/><rect x="1" y="7" width="6" height="1" fill="#008000"/><rect x="7" y="7" width="1" height="1" fill="#a0a0a0"/><rect x="8" y="7" width="1" height="1" fill="#000000"/><rect x="9" y="7" width="2" height="1" fill="#00ff00"/><rect x="11" y="7" width="1" height="1" fill="#000000"/><rect x="12" y="7" width="1" height="1" fill="#008000"/><rect x="13" y="7" width="2" height="1" fill="#00ff00"/><rect x="15" y="7" width="1" height="1" fill="#000000"/><rect x="16" y="7" width="3" height="1" fill="#00ff00"/><rect x="19" y="7" width="1" height="1" fill="#000000"/><rect x="20" y="7" width="1" height="1" fill="#a0a0a0"/><rect x="21" y="7" width="1" height="1" fill="#000000"/><rect x="22" y="7" width="1" height="1" fill="#00ff00"/><rect x="23" y="7" width="1" height="1" fill="#008000"/><rect x="24" y="7" width="1" height="1" fill="#000000"/><rect x="1" y="8" width="3" height="1" fill="#008000"/><rect x="4" y="8" width="3" height="1" fill="#00ff00"/><rect x="7" y="8" width="1" height="1" fill="#008000"/><rect x="8" y="8" width="1" height="1" fill="#000000"/><rect x="9" y="8" width="3" height="1" fill="#00ff00"/><rect x="12" y="8" width="1" height="1" fill="#a0a0a0"/><rect x="13" y="8" width="1" height="1" fill="#000000"/><rect x="14" y="8" width="2" height="1" fill="#00ff00"/><rect x="16" y="8" width="1" height="1" fill="#000000"/><rect x="17" y="8" width="3" height="1" fill="#00ff00"/><rect x="20" y="8" width="1" height="1" fill="#a0a0a0"/><rect x="21" y="8" width="1" height="1" fill="#00ff00"/><rect x="22" y="8" width="1" height="1" fill="#000000"/><rect x="23" y="8" width="1" height="1" fill="#00ff00"/><rect x="24" y="8" width="1" height="1" fill="#000000"/><rect x="1" y="9" width="2" height="1" fill="#008000"/><rect x="3" y="9" width="1" height="1" fill="#00ff00"/><rect x="4" y="9" width="1" height="1" fill="#008000"/><rect x="5" y="9" width="2" height="1" fill="#00ff00"/><rect x="7" y="9" width="1" height="1" fill="#008000"/><rect x="8" y="9" width="1" height="1" fill="#000000"/><rect x="9" y="9" width="1" height="1" fill="#00ff00"/><rect x="10" y="9" width="1" height="1" fill="#008000"/><rect x="11" y="9" width="1" height="1" fill="#000000"/><rect x="12" y="9" width="1" height="1" fill="#a0a0a0"/><rect x="13" y="9" width="1" height="1" fill="#000000"/><rect x="14" y="9" width="3" height="1" fill="#008000"/><rect x="17" y="9" width="1" height="1" fill="#00ff00"/><rect x="18" y="9" width="1" height="1" fill="#008000"/><rect x="19" y="9" width="1" height="1" fill="#00ff00"/><rect x="20" y="9" width="2" height="1" fill="#008000"/><rect x="22" y="9" width="1" height="1" fill="#000000"/><rect x="23" y="9" width="1" height="1" fill="#008000"/><rect x="24" y="9" width="1" height="1" fill="#000000"/><rect x="1" y="10" width="3" height="1" fill="#008000"/><rect x="4" y="10" width="2" height="1" fill="#00ff00"/><rect x="6" y="10" width="1" height="1" fill="#008000"/><rect x="7" y="10" width="1" height="1" fill="#a0a0a0"/><rect x="8" y="10" width="1" height="1" fill="#00ff00"/><rect x="9" y="10" width="1" height="1" fill="#000000"/><rect x="10" y="10" width="6" height="1" fill="#00ff00"/><rect x="16" y="10" width="1" height="1" fill="#000000"/><rect x="17" y="10" width="4" height="1" fill="#707070"/><rect x="21" y="10" width="1" height="1" fill="#000000"/><rect x="22" y="10" width="1" height="1" fill="#00ff00"/><rect x="23" y="10" width="1" height="1" fill="#008000"/><rect x="24" y="10" width="1" height="1" fill="#000000"/><rect x="1" y="11" width="1" height="1" fill="#008000"/><rect x="2" y="11" width="2" height="1" fill="#00ff00"/><rect x="4" y="11" width="2" height="1" fill="#000000"/><rect x="6" y="11" width="1" height="1" fill="#00ff00"/><rect x="7" y="11" width="1" height="1" fill="#a0a0a0"/><rect x="8" y="11" width="2" height="1" fill="#000000"/><rect x="10" y="11" width="3" height="1" fill="#00ff00"/><rect x="13" y="11" width="3" height="1" fill="#008000"/><rect x="16" y="11" width="1" height="1" fill="#000000"/><rect x="17" y="11" width="4" height="1" fill="#e0e0e0"/><rect x="21" y="11" width="1" height="1" fill="#000000"/><rect x="22" y="11" width="1" height="1" fill="#00ff00"/><rect x="23" y="11" width="1" height="1" fill="#008000"/><rect x="24" y="11" width="1" height="1" fill="#000000"/><rect x="1" y="12" width="1" height="1" fill="#008000"/><rect x="2" y="12" width="2" height="1" fill="#00ff00"/><rect x="4" y="12" width="1" height="1" fill="#008000"/><rect x="5" y="12" width="1" height="1" fill="#00ff00"/><rect x="6" y="12" width="1" height="1" fill="#000000"/><rect x="7" y="12" width="3" height="1" fill="#00ff00"/><rect x="10" y="12" width="1" height="1" fill="#008000"/><rect x="11" y="12" width="1" height="1" fill="#00ff00"/><rect x="12" y="12" width="1" height="1" fill="#000000"/><rect x="13" y="12" width="1" height="1" fill="#008000"/><rect x="14" y="12" width="1" height="1" fill="#000000"/><rect x="15" y="12" width="1" height="1" fill="#00ff00"/><rect x="16" y="12" width="6" height="1" fill="#000000"/><rect x="22" y="12" width="2" height="1" fill="#00ff00"/><rect x="24" y="12" width="1" height="1" fill="#000000"/><rect x="4" y="13" width="2" height="1" fill="#00ff00"/><rect x="6" y="13" width="1" height="1" fill="#008000"/><rect x="7" y="13" width="1" height="1" fill="#00ff00"/><rect x="8" y="13" width="1" height="1" fill="#000000"/><rect x="9" y="13" width="2" height="1" fill="#00ff00"/><rect x="11" y="13" width="1" height="1" fill="#000000"/><rect x="12" y="13" width="4" height="1" fill="#00ff00"/><rect x="16" y="13" width="1" height="1" fill="#000000"/><rect x="17" y="13" width="4" height="1" fill="#707070"/><rect x="21" y="13" width="1" height="1" fill="#000000"/><rect x="22" y="13" width="2" height="1" fill="#00ff00"/><rect x="24" y="13" width="1" height="1" fill="#000000"/><rect x="4" y="14" width="2" height="1" fill="#00ff00"/><rect x="6" y="14" width="1" height="1" fill="#008000"/><rect x="7" y="14" width="2" height="1" fill="#000000"/><rect x="9" y="14" width="1" height="1" fill="#00ff00"/><rect x="10" y="14" width="1" height="1" fill="#000000"/><rect x="11" y="14" width="5" height="1" fill="#00ff00"/><rect x="16" y="14" width="1" height="1" fill="#000000"/><rect x="17" y="14" width="4" height="1" fill="#707070"/><rect x="21" y="14" width="1" height="1" fill="#000000"/><rect x="22" y="14" width="1" height="1" fill="#00ff00"/><rect x="23" y="14" width="2" height="1" fill="#000000"/><rect x="4" y="15" width="21" height="1" fill="#000000"/><rect x="16" y="16" width="1" height="1" fill="#000000"/><rect x="17" y="16" width="4" height="1" fill="#707070"/><rect x="21" y="16" width="1" height="1" fill="#000000"/><rect x="16" y="17" width="1" height="1" fill="#000000"/><rect x="17" y="17" width="4" height="1" fill="#707070"/><rect x="21" y="17" width="1" height="1" fill="#000000"/><rect x="7" y="18" width="3" height="1" fill="#707070"/><rect x="16" y="18" width="6" height="1" fill="#000000"/><rect x="6" y="19" width="2" height="1" fill="#707070"/><rect x="8" y="19" width="2" height="1" fill="#c8c8c8"/><rect x="10" y="19" width="1" height="1" fill="#707070"/><rect x="6" y="20" width="1" height="1" fill="#707070"/><rect x="7" y="20" width="2" height="1" fill="#c8c8c8"/><rect x="9" y="20" width="2" height="1" fill="#707070"/><rect x="12" y="20" width="3" height="1" fill="#707070"/><rect x="7" y="21" width="3" height="1" fill="#707070"/><rect x="11" y="21" width="1" height="1" fill="#707070"/><rect x="12" y="21" width="3" height="1" fill="#c8c8c8"/><rect x="15" y="21" width="1" height="1" fill="#707070"/><rect x="12" y="22" width="3" height="1" fill="#707070"/><rect x="15" y="22" width="1" height="1" fill="#000000"/><rect x="9" y="23" width="3" height="1" fill="#707070"/><rect x="14" y="23" width="1" height="1" fill="#000000"/><rect x="8" y="24" width="1" height="1" fill="#707070"/><rect x="9" y="24" width="3" height="1" fill="#c8c8c8"/><rect x="12" y="24" width="1" height="1" fill="#707070"/><rect x="9" y="25" width="2" height="1" fill="#707070"/><rect x="11" y="25" width="2" height="1" fill="#000000"/></svg>
<svg style="position:absolute;left:333px;top:48px" width="27" height="14" viewBox="0 0 27 14" shape-rendering="crispEdges"><rect x="16" y="0" width="6" height="1" fill="#808080"/><rect x="14" y="1" width="10" height="1" fill="#808080"/><rect x="13" y="2" width="12" height="1" fill="#808080"/><rect x="13" y="3" width="12" height="1" fill="#808080"/><rect x="25" y="3" width="1" height="1" fill="#ffffff"/><rect x="13" y="4" width="12" height="1" fill="#808080"/><rect x="25" y="4" width="1" height="1" fill="#ffffff"/><rect x="2" y="5" width="23" height="1" fill="#808080"/><rect x="25" y="5" width="1" height="1" fill="#ffffff"/><rect x="1" y="6" width="24" height="1" fill="#808080"/><rect x="25" y="6" width="1" height="1" fill="#ffffff"/><rect x="1" y="7" width="20" height="1" fill="#808080"/><rect x="21" y="7" width="1" height="1" fill="#ffffff"/><rect x="22" y="7" width="3" height="1" fill="#808080"/><rect x="25" y="7" width="1" height="1" fill="#ffffff"/><rect x="2" y="8" width="22" height="1" fill="#808080"/><rect x="24" y="8" width="2" height="1" fill="#ffffff"/><rect x="3" y="9" width="11" height="1" fill="#808080"/><rect x="14" y="9" width="2" height="1" fill="#ffffff"/><rect x="16" y="9" width="8" height="1" fill="#808080"/><rect x="24" y="9" width="1" height="1" fill="#ffffff"/><rect x="4" y="10" width="1" height="1" fill="#808080"/><rect x="5" y="10" width="1" height="1" fill="#ffffff"/><rect x="7" y="10" width="2" height="1" fill="#808080"/><rect x="9" y="10" width="1" height="1" fill="#ffffff"/><rect x="11" y="10" width="2" height="1" fill="#808080"/><rect x="13" y="10" width="1" height="1" fill="#ffffff"/><rect x="16" y="10" width="8" height="1" fill="#808080"/><rect x="24" y="10" width="1" height="1" fill="#ffffff"/><rect x="5" y="11" width="2" height="1" fill="#ffffff"/><rect x="8" y="11" width="2" height="1" fill="#ffffff"/><rect x="11" y="11" width="2" height="1" fill="#ffffff"/><rect x="17" y="11" width="6" height="1" fill="#808080"/><rect x="23" y="11" width="2" height="1" fill="#ffffff"/><rect x="18" y="12" width="6" height="1" fill="#ffffff"/></svg>
<svg style="position:absolute;left:364px;top:41px" width="27" height="27" viewBox="0 0 27 27" shape-rendering="crispEdges"><g shape-rendering="geometricPrecision"><path d="M2.8 13L14 2.3L25.8 8.3L25.8 15.8L15 25.3L2.8 19Z" fill="#000"/><path d="M3.8 14.5L14.6 20.2V23.6L3.8 18Z" fill="#ffffff"/><path d="M15.6 20L24.8 10.5V14.8L15.6 23.8Z" fill="#c8c8c8"/><path d="M3.6 13.2L14 3.2L25 8.8L14.6 19.3Z" fill="#800080"/><path d="M4.5 12.5L13.5 4" stroke="#a040a0" stroke-width="0.8"/><path d="M13 6.8L15 5.2L21.2 8.6L19.2 10.6Z" fill="#ffff00"/><path d="M3 18.5L14.8 24.6" stroke="#800080" stroke-width="0.8"/></g></svg>
<svg style="position:absolute;left:394px;top:41px" width="30" height="29" viewBox="0 0 30 29" shape-rendering="crispEdges"><g shape-rendering="geometricPrecision"><path d="M3.5 15L14.8 26L28 19.5V21.5L14.8 28L3.5 17Z" fill="#0000ff"/><path d="M3.8 14.5L14.8 25.2L27.8 18.8V20.3L14.8 26.8L3.8 16Z" fill="#000"/><path d="M4 14.8L14.8 25.5L27.5 19.2V19.8L14.8 26.1L4 15.4Z" fill="#ffffff"/><path d="M3.8 14L16 8L27.8 18.6L14.8 24.8Z" fill="#ffffff" stroke="#000" stroke-width="0.9"/><path d="M5.5 14L15.5 10" stroke="#a0a0a0" stroke-width="0.9"/><path d="M12 20.5L20 16.5M15 22.5L23 18.5" stroke="#008b8b" stroke-width="1.2" stroke-dasharray="2 1"/><path d="M4 9.5L6 8.5M5 12L7 10L9 11M8 8L10 7M9 10L11 8.5L12 9.5M11 5.5L13 5M13 8L14 6.5L15.5 7.5" stroke="#000" stroke-width="1.2" fill="none"/><path d="M15.5 7L19.5 3.5L24.5 3.5L28 7V13.5L23 14.5L16 13.5L15.5 10Z" fill="#ffffff" stroke="#000" stroke-width="1"/><path d="M27.6 7.5V13" stroke="#0000ff" stroke-width="1.2"/><path d="M12.5 15.5L25.5 3" stroke="#000" stroke-width="2.8"/><path d="M13 15L25 3.5" stroke="#ff00ff" stroke-width="1.1" stroke-dasharray="1 1"/></g></svg>
<svg style="position:absolute;left:428px;top:44px" width="24" height="21" viewBox="0 0 24 21" shape-rendering="crispEdges"><rect x="15" y="3" width="3" height="1" fill="#909090"/><rect x="13" y="4" width="1" height="1" fill="#909090"/><rect x="14" y="4" width="5" height="1" fill="#ffffff"/><rect x="19" y="4" width="1" height="1" fill="#909090"/><rect x="12" y="5" width="1" height="1" fill="#909090"/><rect x="13" y="5" width="7" height="1" fill="#ffffff"/><rect x="20" y="5" width="2" height="1" fill="#909090"/><rect x="10" y="6" width="2" height="1" fill="#909090"/><rect x="13" y="6" width="6" height="1" fill="#ffffff"/><rect x="19" y="6" width="1" height="1" fill="#909090"/><rect x="8" y="7" width="2" height="1" fill="#909090"/><rect x="12" y="7" width="6" height="1" fill="#ffffff"/><rect x="18" y="7" width="1" height="1" fill="#909090"/><rect x="6" y="8" width="2" height="1" fill="#909090"/><rect x="10" y="8" width="3" height="1" fill="#e4e4e4"/><rect x="13" y="8" width="4" height="1" fill="#ffffff"/><rect x="17" y="8" width="1" height="1" fill="#909090"/><rect x="18" y="8" width="1" height="1" fill="#e4e4e4"/><rect x="19" y="8" width="1" height="1" fill="#909090"/><rect x="4" y="9" width="1" height="1" fill="#909090"/><rect x="5" y="9" width="1" height="1" fill="#e4e4e4"/><rect x="6" y="9" width="1" height="1" fill="#ffffff"/><rect x="7" y="9" width="2" height="1" fill="#e4e4e4"/><rect x="9" y="9" width="2" height="1" fill="#00e000"/><rect x="11" y="9" width="4" height="1" fill="#e4e4e4"/><rect x="15" y="9" width="2" height="1" fill="#c8c8c8"/><rect x="17" y="9" width="1" height="1" fill="#909090"/><rect x="18" y="9" width="3" height="1" fill="#e4e4e4"/><rect x="21" y="9" width="1" height="1" fill="#909090"/><rect x="22" y="9" width="1" height="1" fill="#000000"/><rect x="4" y="10" width="1" height="1" fill="#909090"/><rect x="5" y="10" width="2" height="1" fill="#ffffff"/><rect x="7" y="10" width="4" height="1" fill="#e4e4e4"/><rect x="11" y="10" width="2" height="1" fill="#ff0000"/><rect x="13" y="10" width="1" height="1" fill="#e4e4e4"/><rect x="14" y="10" width="7" height="1" fill="#c8c8c8"/><rect x="21" y="10" width="1" height="1" fill="#a0a0a0"/><rect x="22" y="10" width="1" height="1" fill="#000000"/><rect x="4" y="11" width="2" height="1" fill="#ffffff"/><rect x="6" y="11" width="1" height="1" fill="#e4e4e4"/><rect x="7" y="11" width="3" height="1" fill="#c8c8c8"/><rect x="10" y="11" width="4" height="1" fill="#e4e4e4"/><rect x="14" y="11" width="4" height="1" fill="#c8c8c8"/><rect x="18" y="11" width="4" height="1" fill="#a0a0a0"/><rect x="22" y="11" width="1" height="1" fill="#000000"/><rect x="4" y="12" width="1" height="1" fill="#ffffff"/><rect x="5" y="12" width="1" height="1" fill="#e4e4e4"/><rect x="6" y="12" width="4" height="1" fill="#c8c8c8"/><rect x="10" y="12" width="2" height="1" fill="#ffffff"/><rect x="12" y="12" width="3" height="1" fill="#c8c8c8"/><rect x="15" y="12" width="7" height="1" fill="#a0a0a0"/><rect x="22" y="12" width="1" height="1" fill="#000000"/><rect x="4" y="13" width="2" height="1" fill="#000000"/><rect x="6" y="13" width="6" height="1" fill="#c8c8c8"/><rect x="12" y="13" width="1" height="1" fill="#ffffff"/><rect x="13" y="13" width="1" height="1" fill="#c8c8c8"/><rect x="14" y="13" width="7" height="1" fill="#a0a0a0"/><rect x="21" y="13" width="2" height="1" fill="#000000"/><rect x="4" y="14" width="1" height="1" fill="#ffffff"/><rect x="5" y="14" width="2" height="1" fill="#000000"/><rect x="7" y="14" width="7" height="1" fill="#c8c8c8"/><rect x="14" y="14" width="5" height="1" fill="#a0a0a0"/><rect x="19" y="14" width="2" height="1" fill="#000000"/><rect x="21" y="14" width="1" height="1" fill="#ffffff"/><rect x="5" y="15" width="1" height="1" fill="#000000"/><rect x="6" y="15" width="2" height="1" fill="#ffffff"/><rect x="8" y="15" width="2" height="1" fill="#000000"/><rect x="10" y="15" width="4" height="1" fill="#c8c8c8"/><rect x="14" y="15" width="3" height="1" fill="#a0a0a0"/><rect x="17" y="15" width="2" height="1" fill="#000000"/><rect x="19" y="15" width="1" height="1" fill="#ffffff"/><rect x="20" y="15" width="2" height="1" fill="#000000"/><rect x="6" y="16" width="2" height="1" fill="#000000"/><rect x="8" y="16" width="2" height="1" fill="#ffffff"/><rect x="10" y="16" width="2" height="1" fill="#000000"/><rect x="12" y="16" width="1" height="1" fill="#c8c8c8"/><rect x="13" y="16" width="2" height="1" fill="#a0a0a0"/><rect x="15" y="16" width="2" height="1" fill="#000000"/><rect x="17" y="16" width="2" height="1" fill="#ffffff"/><rect x="19" y="16" width="2" height="1" fill="#000000"/><rect x="8" y="17" width="2" height="1" fill="#000000"/><rect x="10" y="17" width="2" height="1" fill="#ffffff"/><rect x="12" y="17" width="4" height="1" fill="#000000"/><rect x="16" y="17" width="2" height="1" fill="#ffffff"/><rect x="18" y="17" width="2" height="1" fill="#000000"/><rect x="10" y="18" width="2" height="1" fill="#000000"/><rect x="12" y="18" width="4" height="1" fill="#ffffff"/><rect x="16" y="18" width="2" height="1" fill="#000000"/><rect x="12" y="19" width="4" height="1" fill="#000000"/></svg>
<svg style="position:absolute;left:468px;top:47px" width="22" height="21" viewBox="0 0 22 21" shape-rendering="crispEdges"><rect x="6" y="1" width="12" height="2" fill="#505050"/><rect x="6" y="1" width="2" height="15" fill="#505050"/><rect x="16" y="1" width="2" height="15" fill="#505050"/><rect x="8" y="3" width="8" height="12" fill="#e8e8e8"/><rect x="3" y="15" width="18" height="1" fill="#505050"/><path d="M11.5 8L16.5 3.5V15.5L11.5 20Z" fill="#e0a000" stroke="#4a4a5a" shape-rendering="geometricPrecision"/><path d="M13 12.5Q14 11.5 13.5 13.5" stroke="#4a4a5a" fill="none" stroke-width="0.8" shape-rendering="geometricPrecision"/><path d="M1.5 8H6V5.8L10.3 9.5L6 13.2V11H1.5Z" fill="#00dd00" stroke="#603060" stroke-width="0.8" shape-rendering="geometricPrecision"/></svg>
<svg style="position:absolute;left:18px;top:622px" width="15" height="15" viewBox="0 0 15 15" shape-rendering="crispEdges"><g shape-rendering="geometricPrecision"><circle cx="7.5" cy="7.5" r="7" fill="#fff" stroke="#000" stroke-width="1.1"/></g><rect x="6" y="3" width="3" height="2" fill="#0000ff"/><rect x="6" y="6" width="3" height="5" fill="#0000ff"/><rect x="5" y="6" width="1" height="1" fill="#0000ff"/><rect x="5" y="10" width="5" height="1" fill="#0000ff"/></svg>
<div class="t" style="left:44px;top:625px;">Status dokumenta</div>
<div class="b" style="left:148px;top:625px;letter-spacing:0.3px">KNJIŽEN</div>
<div class="t" style="left:44px;top:669px;">Datum</div>
<div style="left:97px;top:664px;width:88px;height:18px;background:#d4d0c8;border:1px solid;border-color:#808080 #ffffff #ffffff #808080;box-shadow:inset 1px 1px #404040,inset -1px -1px #d4d0c8;"></div>
<div class="t" style="left:101px;top:669px;color:#808080">31. 1 .2014</div>
<div style="left:169px;top:666px;width:14px;height:14px;background:#d4d0c8;border:1px solid;border-color:#d4d0c8 #404040 #404040 #d4d0c8;box-shadow:inset 1px 1px #ffffff,inset -1px -1px #808080;"></div>
<svg style="position:absolute;left:173px;top:672px" width="8" height="5" viewBox="0 0 8 5" shape-rendering="crispEdges"><path d="M0 0H7L3.5 4Z" fill="#808080" shape-rendering="geometricPrecision"/></svg>
<svg style="position:absolute;left:17px;top:691px" width="15" height="15" viewBox="0 0 15 15" shape-rendering="crispEdges"><g shape-rendering="geometricPrecision"><circle cx="7.5" cy="7.5" r="7" fill="#fff" stroke="#000" stroke-width="1.1"/></g><rect x="6" y="3" width="3" height="2" fill="#0000ff"/><rect x="6" y="6" width="3" height="5" fill="#0000ff"/><rect x="5" y="6" width="1" height="1" fill="#0000ff"/><rect x="5" y="10" width="5" height="1" fill="#0000ff"/></svg>
<div class="t" style="left:44px;top:694px;">Broj</div>
<div style="left:97px;top:689px;width:88px;height:18px;background:#d4d0c8;border:1px solid;border-color:#808080 #ffffff #ffffff #808080;box-shadow:inset 1px 1px #404040,inset -1px -1px #d4d0c8;"></div>
<div class="t r" style="right:789px;top:693px;text-align:right;">1</div>
<div class="t" style="left:44px;top:719px;">Valuta dokumenta</div>
<div style="left:142px;top:714px;width:43px;height:18px;background:#d4d0c8;border:1px solid;border-color:#808080 #ffffff #ffffff #808080;box-shadow:inset 1px 1px #404040,inset -1px -1px #d4d0c8;"></div>
<div class="t" style="left:145px;top:718px;">HRK</div>
<div class="t e" style="left:244px;top:719px;word-spacing:1.1px">Postavi razdoblje dnevnika prema datumima pripadajućih uplata/isplata</div>
<div style="left:0px;top:748px;width:25px;height:14px;border:1px solid;border-color:#808080 #ffffff #ffffff #808080;box-sizing:border-box"></div>
<svg style="position:absolute;left:0px;top:747px" width="20" height="16" viewBox="0 0 20 16" shape-rendering="crispEdges"><path d="M8 2H17V12L14 14H6V11L8 9Z" fill="#ffffff"/><rect x="9" y="2" width="1" height="1" fill="#ffff00"/><rect x="13" y="2" width="1" height="1" fill="#ffff00"/><rect x="11" y="3" width="1" height="1" fill="#ffff00"/><rect x="15" y="3" width="1" height="1" fill="#ffff00"/><rect x="13" y="4" width="1" height="1" fill="#ffff00"/><rect x="15" y="5" width="1" height="1" fill="#ffff00"/><rect x="11" y="5" width="1" height="1" fill="#ffff00"/><rect x="13" y="6" width="1" height="1" fill="#ffff00"/><rect x="15" y="7" width="1" height="1" fill="#ffff00"/><rect x="11" y="7" width="1" height="1" fill="#ffff00"/><rect x="13" y="8" width="1" height="1" fill="#ffff00"/><rect x="9" y="8" width="1" height="1" fill="#ffff00"/><rect x="15" y="9" width="1" height="1" fill="#ffff00"/><rect x="11" y="9" width="1" height="1" fill="#ffff00"/><rect x="7" y="10" width="1" height="1" fill="#ffff00"/><rect x="9" y="11" width="1" height="1" fill="#ffff00"/><rect x="13" y="10" width="1" height="1" fill="#ffff00"/><rect x="7" y="12" width="1" height="1" fill="#ffff00"/><rect x="11" y="12" width="1" height="1" fill="#ffff00"/><rect x="17" y="1" width="1" height="11" fill="#000"/><rect x="16" y="12" width="1" height="1" fill="#000"/><rect x="14" y="13" width="2" height="1" fill="#000"/><rect x="6" y="14" width="8" height="1" fill="#000"/><path d="M12 12L13 10L15 11" stroke="#000" fill="none" stroke-width="1"/><rect x="2" y="3" width="2" height="1" fill="#000000"/><rect x="6" y="3" width="3" height="1" fill="#000000"/><rect x="1" y="4" width="1" height="1" fill="#000000"/><rect x="2" y="4" width="2" height="1" fill="#00d0d0"/><rect x="4" y="4" width="2" height="1" fill="#000000"/><rect x="6" y="4" width="3" height="1" fill="#00d0d0"/><rect x="9" y="4" width="1" height="1" fill="#000000"/><rect x="1" y="5" width="1" height="1" fill="#000000"/><rect x="2" y="5" width="2" height="1" fill="#00d0d0"/><rect x="4" y="5" width="1" height="1" fill="#000000"/><rect x="5" y="5" width="1" height="1" fill="#00d0d0"/><rect x="6" y="5" width="1" height="1" fill="#000000"/><rect x="7" y="5" width="2" height="1" fill="#00d0d0"/><rect x="9" y="5" width="3" height="1" fill="#000000"/><rect x="1" y="6" width="1" height="1" fill="#000000"/><rect x="2" y="6" width="2" height="1" fill="#00d0d0"/><rect x="4" y="6" width="2" height="1" fill="#000000"/><rect x="6" y="6" width="2" height="1" fill="#00d0d0"/><rect x="8" y="6" width="1" height="1" fill="#000000"/><rect x="2" y="7" width="2" height="1" fill="#000000"/><rect x="6" y="7" width="3" height="1" fill="#000000"/></svg>
<div style="left:27px;top:748px;width:75px;height:14px;border:1px solid;border-color:#808080 #ffffff #ffffff #808080;box-sizing:border-box"></div>
<div class="t" style="left:28px;top:749px;">Godina 2014</div>
<div style="left:104px;top:748px;width:34px;height:14px;border:1px solid;border-color:#808080 #ffffff #ffffff #808080;box-sizing:border-box"></div>
<div class="t" style="left:105px;top:749px;">HRK</div>
<div style="left:140px;top:748px;width:74px;height:14px;border:1px solid;border-color:#808080 #ffffff #ffffff #808080;box-sizing:border-box"></div>
<div class="t" style="left:141px;top:749px;">Demo d.o.o.</div>
<div style="left:216px;top:748px;width:107px;height:14px;border:1px solid;border-color:#808080 #ffffff #ffffff #808080;box-sizing:border-box"></div>
<div class="t" style="left:217px;top:749px;">C:\Temp\demo.dat</div>
<div style="left:325px;top:748px;width:666px;height:14px;border:1px solid;border-color:#808080 #ffffff #ffffff #808080;box-sizing:border-box"></div>
<div style="left:838px;top:747px;width:140px;height:14px;background:#d4d0c8"></div>
<div class="t" style="left:849px;top:748px;color:#0000ff"><u>Demo verzija programa Poslovanje</u></div>
<div style="left:201px;top:181px;width:708px;height:528px;background:#d4d0c8;border:1px solid;border-color:#d4d0c8 #404040 #404040 #d4d0c8;box-shadow:inset 1px 1px #ffffff,inset -1px -1px #808080;"></div>
<div style="left:205px;top:185px;width:702px;height:18px;background:linear-gradient(to right,#0a246a 0px,#a6caf0 650px)"></div>
<svg style="position:absolute;left:207px;top:186px" width="16" height="15" viewBox="0 0 16 15" shape-rendering="crispEdges"><rect x="0" y="0" width="16" height="1" fill="#d4d0c8"/><rect x="0" y="1" width="1" height="1" fill="#d4d0c8"/><rect x="1" y="1" width="5" height="1" fill="#0a246a"/><rect x="6" y="1" width="1" height="1" fill="#d4d0c8"/><rect x="7" y="1" width="8" height="1" fill="#808000"/><rect x="15" y="1" width="1" height="1" fill="#d4d0c8"/><rect x="0" y="2" width="1" height="1" fill="#d4d0c8"/><rect x="1" y="2" width="5" height="1" fill="#0a246a"/><rect x="6" y="2" width="1" height="1" fill="#d4d0c8"/><rect x="7" y="2" width="1" height="1" fill="#808000"/><rect x="8" y="2" width="6" height="1" fill="#ffffff"/><rect x="14" y="2" width="1" height="1" fill="#808000"/><rect x="15" y="2" width="1" height="1" fill="#d4d0c8"/><rect x="0" y="3" width="1" height="1" fill="#d4d0c8"/><rect x="1" y="3" width="5" height="1" fill="#0a246a"/><rect x="6" y="3" width="1" height="1" fill="#d4d0c8"/><rect x="7" y="3" width="1" height="1" fill="#808000"/><rect x="8" y="3" width="1" height="1" fill="#ffffff"/><rect x="9" y="3" width="5" height="1" fill="#ffff00"/><rect x="14" y="3" width="1" height="1" fill="#808000"/><rect x="15" y="3" width="1" height="1" fill="#d4d0c8"/><rect x="0" y="4" width="7" height="1" fill="#d4d0c8"/><rect x="7" y="4" width="1" height="1" fill="#808000"/><rect x="8" y="4" width="1" height="1" fill="#ffffff"/><rect x="9" y="4" width="5" height="1" fill="#ffff00"/><rect x="14" y="4" width="1" height="1" fill="#808000"/><rect x="15" y="4" width="1" height="1" fill="#d4d0c8"/><rect x="0" y="5" width="1" height="1" fill="#d4d0c8"/><rect x="1" y="5" width="5" height="1" fill="#800000"/><rect x="6" y="5" width="1" height="1" fill="#d4d0c8"/><rect x="7" y="5" width="1" height="1" fill="#808000"/><rect x="8" y="5" width="1" height="1" fill="#ffffff"/><rect x="9" y="5" width="5" height="1" fill="#ffff00"/><rect x="14" y="5" width="1" height="1" fill="#808000"/><rect x="15" y="5" width="1" height="1" fill="#d4d0c8"/><rect x="0" y="6" width="1" height="1" fill="#d4d0c8"/><rect x="1" y="6" width="1" height="1" fill="#800000"/><rect x="2" y="6" width="3" height="1" fill="#ff00ff"/><rect x="5" y="6" width="1" height="1" fill="#800000"/><rect x="6" y="6" width="1" height="1" fill="#d4d0c8"/><rect x="7" y="6" width="1" height="1" fill="#808000"/><rect x="8" y="6" width="1" height="1" fill="#ffffff"/><rect x="9" y="6" width="5" height="1" fill="#ffff00"/><rect x="14" y="6" width="1" height="1" fill="#808000"/><rect x="15" y="6" width="1" height="1" fill="#d4d0c8"/><rect x="0" y="7" width="1" height="1" fill="#d4d0c8"/><rect x="1" y="7" width="1" height="1" fill="#800000"/><rect x="2" y="7" width="1" height="1" fill="#ff00ff"/><rect x="3" y="7" width="2" height="1" fill="#ff0000"/><rect x="5" y="7" width="1" height="1" fill="#800000"/><rect x="6" y="7" width="1" height="1" fill="#d4d0c8"/><rect x="7" y="7" width="1" height="1" fill="#808000"/><rect x="8" y="7" width="1" height="1" fill="#ffffff"/><rect x="9" y="7" width="5" height="1" fill="#ffff00"/><rect x="14" y="7" width="1" height="1" fill="#808000"/><rect x="15" y="7" width="1" height="1" fill="#d4d0c8"/><rect x="0" y="8" width="1" height="1" fill="#d4d0c8"/><rect x="1" y="8" width="1" height="1" fill="#800000"/><rect x="2" y="8" width="1" height="1" fill="#ff00ff"/><rect x="3" y="8" width="2" height="1" fill="#ff0000"/><rect x="5" y="8" width="1" height="1" fill="#800000"/><rect x="6" y="8" width="1" height="1" fill="#d4d0c8"/><rect x="7" y="8" width="8" height="1" fill="#808000"/><rect x="15" y="8" width="1" height="1" fill="#d4d0c8"/><rect x="0" y="9" width="1" height="1" fill="#d4d0c8"/><rect x="1" y="9" width="1" height="1" fill="#800000"/><rect x="2" y="9" width="1" height="1" fill="#ff00ff"/><rect x="3" y="9" width="2" height="1" fill="#ff0000"/><rect x="5" y="9" width="1" height="1" fill="#800000"/><rect x="6" y="9" width="10" height="1" fill="#d4d0c8"/><rect x="0" y="10" width="1" height="1" fill="#d4d0c8"/><rect x="1" y="10" width="5" height="1" fill="#800000"/><rect x="6" y="10" width="1" height="1" fill="#d4d0c8"/><rect x="7" y="10" width="6" height="1" fill="#0000ff"/><rect x="13" y="10" width="1" height="1" fill="#d4d0c8"/><rect x="14" y="10" width="1" height="1" fill="#0a246a"/><rect x="15" y="10" width="1" height="1" fill="#d4d0c8"/><rect x="0" y="11" width="7" height="1" fill="#d4d0c8"/><rect x="7" y="11" width="1" height="1" fill="#0000ff"/><rect x="8" y="11" width="4" height="1" fill="#00ffff"/><rect x="12" y="11" width="1" height="1" fill="#0000ff"/><rect x="13" y="11" width="1" height="1" fill="#d4d0c8"/><rect x="14" y="11" width="1" height="1" fill="#0a246a"/><rect x="15" y="11" width="1" height="1" fill="#d4d0c8"/><rect x="0" y="12" width="1" height="1" fill="#d4d0c8"/><rect x="1" y="12" width="2" height="1" fill="#0a246a"/><rect x="3" y="12" width="1" height="1" fill="#d4d0c8"/><rect x="4" y="12" width="2" height="1" fill="#0a246a"/><rect x="6" y="12" width="1" height="1" fill="#d4d0c8"/><rect x="7" y="12" width="1" height="1" fill="#0000ff"/><rect x="8" y="12" width="1" height="1" fill="#00ffff"/><rect x="9" y="12" width="3" height="1" fill="#008080"/><rect x="12" y="12" width="1" height="1" fill="#0000ff"/><rect x="13" y="12" width="1" height="1" fill="#d4d0c8"/><rect x="14" y="12" width="1" height="1" fill="#0a246a"/><rect x="15" y="12" width="1" height="1" fill="#d4d0c8"/><rect x="0" y="13" width="1" height="1" fill="#d4d0c8"/><rect x="1" y="13" width="2" height="1" fill="#0a246a"/><rect x="3" y="13" width="1" height="1" fill="#d4d0c8"/><rect x="4" y="13" width="2" height="1" fill="#0a246a"/><rect x="6" y="13" width="1" height="1" fill="#d4d0c8"/><rect x="7" y="13" width="6" height="1" fill="#0000ff"/><rect x="13" y="13" width="1" height="1" fill="#d4d0c8"/><rect x="14" y="13" width="1" height="1" fill="#0a246a"/><rect x="15" y="13" width="1" height="1" fill="#d4d0c8"/><rect x="0" y="14" width="16" height="1" fill="#d4d0c8"/></svg>
<div class="b" style="left:225px;top:188px;color:#fff;letter-spacing:0.2px">Uplate/isplate</div>
<div style="left:855px;top:187px;width:14px;height:12px;background:#d4d0c8;border:1px solid;border-color:#d4d0c8 #404040 #404040 #d4d0c8;box-shadow:inset 1px 1px #ffffff,inset -1px -1px #808080;"></div>
<div style="left:871px;top:187px;width:14px;height:12px;background:#d4d0c8;border:1px solid;border-color:#d4d0c8 #404040 #404040 #d4d0c8;box-shadow:inset 1px 1px #ffffff,inset -1px -1px #808080;"></div>
<div style="left:889px;top:187px;width:14px;height:12px;background:#d4d0c8;border:1px solid;border-color:#d4d0c8 #404040 #404040 #d4d0c8;box-shadow:inset 1px 1px #ffffff,inset -1px -1px #808080;"></div>
<div style="left:860px;top:197px;width:6px;height:2px;background:#fff"></div>
<div style="left:859px;top:196px;width:6px;height:2px;background:#808080"></div>
<div style="left:875px;top:189px;width:9px;height:9px;border:1px solid #000;border-top-width:2px;box-sizing:border-box"></div>
<svg style="position:absolute;left:893px;top:190px" width="8" height="7" viewBox="0 0 8 7" shape-rendering="crispEdges"><path d="M0.5 0.5L7.5 6.5M7.5 0.5L0.5 6.5" stroke="#000" stroke-width="1.5" shape-rendering="geometricPrecision"/></svg>
<svg style="position:absolute;left:214px;top:213px" width="14" height="12" viewBox="0 0 14 12" shape-rendering="crispEdges"><rect x="5" y="0" width="1" height="1" fill="#0030b0"/><rect x="4" y="1" width="1" height="1" fill="#0030b0"/><rect x="3" y="2" width="1" height="1" fill="#0030b0"/><rect x="4" y="2" width="1" height="1" fill="#3399ff"/><rect x="2" y="3" width="1" height="1" fill="#0030b0"/><rect x="3" y="3" width="2" height="1" fill="#3399ff"/><rect x="1" y="4" width="1" height="1" fill="#0030b0"/><rect x="2" y="4" width="3" height="1" fill="#3399ff"/><rect x="0" y="5" width="1" height="1" fill="#0030b0"/><rect x="1" y="5" width="4" height="1" fill="#3399ff"/><rect x="0" y="6" width="1" height="1" fill="#0030b0"/><rect x="1" y="6" width="4" height="1" fill="#3399ff"/><rect x="1" y="7" width="1" height="1" fill="#0030b0"/><rect x="2" y="7" width="3" height="1" fill="#3399ff"/><rect x="2" y="8" width="1" height="1" fill="#0030b0"/><rect x="3" y="8" width="2" height="1" fill="#3399ff"/><rect x="3" y="9" width="1" height="1" fill="#0030b0"/><rect x="4" y="9" width="1" height="1" fill="#3399ff"/><rect x="4" y="10" width="1" height="1" fill="#0030b0"/><rect x="5" y="11" width="1" height="1" fill="#0030b0"/><rect x="5" y="0" width="2" height="12" fill="#0030b0"/><rect x="12" y="0" width="1" height="1" fill="#0030b0"/><rect x="11" y="1" width="1" height="1" fill="#0030b0"/><rect x="10" y="2" width="1" height="1" fill="#0030b0"/><rect x="11" y="2" width="1" height="1" fill="#3399ff"/><rect x="9" y="3" width="1" height="1" fill="#0030b0"/><rect x="10" y="3" width="2" height="1" fill="#3399ff"/><rect x="8" y="4" width="1" height="1" fill="#0030b0"/><rect x="9" y="4" width="3" height="1" fill="#3399ff"/><rect x="7" y="5" width="1" height="1" fill="#0030b0"/><rect x="8" y="5" width="4" height="1" fill="#3399ff"/><rect x="7" y="6" width="1" height="1" fill="#0030b0"/><rect x="8" y="6" width="4" height="1" fill="#3399ff"/><rect x="8" y="7" width="1" height="1" fill="#0030b0"/><rect x="9" y="7" width="3" height="1" fill="#3399ff"/><rect x="9" y="8" width="1" height="1" fill="#0030b0"/><rect x="10" y="8" width="2" height="1" fill="#3399ff"/><rect x="10" y="9" width="1" height="1" fill="#0030b0"/><rect x="11" y="9" width="1" height="1" fill="#3399ff"/><rect x="11" y="10" width="1" height="1" fill="#0030b0"/><rect x="12" y="11" width="1" height="1" fill="#0030b0"/><rect x="12" y="0" width="2" height="12" fill="#0030b0"/></svg>
<svg style="position:absolute;left:249px;top:213px" width="7" height="12" viewBox="0 0 7 12" shape-rendering="crispEdges"><rect x="5" y="0" width="1" height="1" fill="#0030b0"/><rect x="4" y="1" width="1" height="1" fill="#0030b0"/><rect x="3" y="2" width="1" height="1" fill="#0030b0"/><rect x="4" y="2" width="1" height="1" fill="#3399ff"/><rect x="2" y="3" width="1" height="1" fill="#0030b0"/><rect x="3" y="3" width="2" height="1" fill="#3399ff"/><rect x="1" y="4" width="1" height="1" fill="#0030b0"/><rect x="2" y="4" width="3" height="1" fill="#3399ff"/><rect x="0" y="5" width="1" height="1" fill="#0030b0"/><rect x="1" y="5" width="4" height="1" fill="#3399ff"/><rect x="0" y="6" width="1" height="1" fill="#0030b0"/><rect x="1" y="6" width="4" height="1" fill="#3399ff"/><rect x="1" y="7" width="1" height="1" fill="#0030b0"/><rect x="2" y="7" width="3" height="1" fill="#3399ff"/><rect x="2" y="8" width="1" height="1" fill="#0030b0"/><rect x="3" y="8" width="2" height="1" fill="#3399ff"/><rect x="3" y="9" width="1" height="1" fill="#0030b0"/><rect x="4" y="9" width="1" height="1" fill="#3399ff"/><rect x="4" y="10" width="1" height="1" fill="#0030b0"/><rect x="5" y="11" width="1" height="1" fill="#0030b0"/><rect x="5" y="0" width="2" height="12" fill="#0030b0"/></svg>
<svg style="position:absolute;left:282px;top:213px" width="7" height="12" viewBox="0 0 7 12" shape-rendering="crispEdges"><rect x="1" y="0" width="1" height="1" fill="#0030b0"/><rect x="2" y="1" width="1" height="1" fill="#0030b0"/><rect x="3" y="2" width="1" height="1" fill="#0030b0"/><rect x="2" y="2" width="1" height="1" fill="#3399ff"/><rect x="4" y="3" width="1" height="1" fill="#0030b0"/><rect x="2" y="3" width="2" height="1" fill="#3399ff"/><rect x="5" y="4" width="1" height="1" fill="#0030b0"/><rect x="2" y="4" width="3" height="1" fill="#3399ff"/><rect x="6" y="5" width="1" height="1" fill="#0030b0"/><rect x="2" y="5" width="4" height="1" fill="#3399ff"/><rect x="6" y="6" width="1" height="1" fill="#0030b0"/><rect x="2" y="6" width="4" height="1" fill="#3399ff"/><rect x="5" y="7" width="1" height="1" fill="#0030b0"/><rect x="2" y="7" width="3" height="1" fill="#3399ff"/><rect x="4" y="8" width="1" height="1" fill="#0030b0"/><rect x="2" y="8" width="2" height="1" fill="#3399ff"/><rect x="3" y="9" width="1" height="1" fill="#0030b0"/><rect x="2" y="9" width="1" height="1" fill="#3399ff"/><rect x="2" y="10" width="1" height="1" fill="#0030b0"/><rect x="1" y="11" width="1" height="1" fill="#0030b0"/><rect x="0" y="0" width="2" height="12" fill="#0030b0"/></svg>
<svg style="position:absolute;left:310px;top:213px" width="14" height="12" viewBox="0 0 14 12" shape-rendering="crispEdges"><rect x="1" y="0" width="1" height="1" fill="#0030b0"/><rect x="2" y="1" width="1" height="1" fill="#0030b0"/><rect x="3" y="2" width="1" height="1" fill="#0030b0"/><rect x="2" y="2" width="1" height="1" fill="#3399ff"/><rect x="4" y="3" width="1" height="1" fill="#0030b0"/><rect x="2" y="3" width="2" height="1" fill="#3399ff"/><rect x="5" y="4" width="1" height="1" fill="#0030b0"/><rect x="2" y="4" width="3" height="1" fill="#3399ff"/><rect x="6" y="5" width="1" height="1" fill="#0030b0"/><rect x="2" y="5" width="4" height="1" fill="#3399ff"/><rect x="6" y="6" width="1" height="1" fill="#0030b0"/><rect x="2" y="6" width="4" height="1" fill="#3399ff"/><rect x="5" y="7" width="1" height="1" fill="#0030b0"/><rect x="2" y="7" width="3" height="1" fill="#3399ff"/><rect x="4" y="8" width="1" height="1" fill="#0030b0"/><rect x="2" y="8" width="2" height="1" fill="#3399ff"/><rect x="3" y="9" width="1" height="1" fill="#0030b0"/><rect x="2" y="9" width="1" height="1" fill="#3399ff"/><rect x="2" y="10" width="1" height="1" fill="#0030b0"/><rect x="1" y="11" width="1" height="1" fill="#0030b0"/><rect x="0" y="0" width="2" height="12" fill="#0030b0"/><rect x="8" y="0" width="1" height="1" fill="#0030b0"/><rect x="9" y="1" width="1" height="1" fill="#0030b0"/><rect x="10" y="2" width="1" height="1" fill="#0030b0"/><rect x="9" y="2" width="1" height="1" fill="#3399ff"/><rect x="11" y="3" width="1" height="1" fill="#0030b0"/><rect x="9" y="3" width="2" height="1" fill="#3399ff"/><rect x="12" y="4" width="1" height="1" fill="#0030b0"/><rect x="9" y="4" width="3" height="1" fill="#3399ff"/><rect x="13" y="5" width="1" height="1" fill="#0030b0"/><rect x="9" y="5" width="4" height="1" fill="#3399ff"/><rect x="13" y="6" width="1" height="1" fill="#0030b0"/><rect x="9" y="6" width="4" height="1" fill="#3399ff"/><rect x="12" y="7" width="1" height="1" fill="#0030b0"/><rect x="9" y="7" width="3" height="1" fill="#3399ff"/><rect x="11" y="8" width="1" height="1" fill="#0030b0"/><rect x="9" y="8" width="2" height="1" fill="#3399ff"/><rect x="10" y="9" width="1" height="1" fill="#0030b0"/><rect x="9" y="9" width="1" height="1" fill="#3399ff"/><rect x="9" y="10" width="1" height="1" fill="#0030b0"/><rect x="8" y="11" width="1" height="1" fill="#0030b0"/><rect x="7" y="0" width="2" height="12" fill="#0030b0"/></svg>
<div style="left:334px;top:206px;width:1px;height:26px;background:#808080"></div>
<div style="left:335px;top:206px;width:1px;height:26px;background:#ffffff"></div>
<div style="left:370px;top:206px;width:1px;height:26px;background:#808080"></div>
<div style="left:371px;top:206px;width:1px;height:26px;background:#ffffff"></div>
<svg style="position:absolute;left:339px;top:208px" width="24" height="21" viewBox="0 0 24 21" shape-rendering="crispEdges"><rect x="15" y="3" width="3" height="1" fill="#909090"/><rect x="13" y="4" width="1" height="1" fill="#909090"/><rect x="14" y="4" width="5" height="1" fill="#ffffff"/><rect x="19" y="4" width="1" height="1" fill="#909090"/><rect x="12" y="5" width="1" height="1" fill="#909090"/><rect x="13" y="5" width="7" height="1" fill="#ffffff"/><rect x="20" y="5" width="2" height="1" fill="#909090"/><rect x="10" y="6" width="2" height="1" fill="#909090"/><rect x="13" y="6" width="6" height="1" fill="#ffffff"/><rect x="19" y="6" width="1" height="1" fill="#909090"/><rect x="8" y="7" width="2" height="1" fill="#909090"/><rect x="12" y="7" width="6" height="1" fill="#ffffff"/><rect x="18" y="7" width="1" height="1" fill="#909090"/><rect x="6" y="8" width="2" height="1" fill="#909090"/><rect x="10" y="8" width="3" height="1" fill="#e4e4e4"/><rect x="13" y="8" width="4" height="1" fill="#ffffff"/><rect x="17" y="8" width="1" height="1" fill="#909090"/><rect x="18" y="8" width="1" height="1" fill="#e4e4e4"/><rect x="19" y="8" width="1" height="1" fill="#909090"/><rect x="4" y="9" width="1" height="1" fill="#909090"/><rect x="5" y="9" width="1" height="1" fill="#e4e4e4"/><rect x="6" y="9" width="1" height="1" fill="#ffffff"/><rect x="7" y="9" width="2" height="1" fill="#e4e4e4"/><rect x="9" y="9" width="2" height="1" fill="#00e000"/><rect x="11" y="9" width="4" height="1" fill="#e4e4e4"/><rect x="15" y="9" width="2" height="1" fill="#c8c8c8"/><rect x="17" y="9" width="1" height="1" fill="#909090"/><rect x="18" y="9" width="3" height="1" fill="#e4e4e4"/><rect x="21" y="9" width="1" height="1" fill="#909090"/><rect x="22" y="9" width="1" height="1" fill="#000000"/><rect x="4" y="10" width="1" height="1" fill="#909090"/><rect x="5" y="10" width="2" height="1" fill="#ffffff"/><rect x="7" y="10" width="4" height="1" fill="#e4e4e4"/><rect x="11" y="10" width="2" height="1" fill="#ff0000"/><rect x="13" y="10" width="1" height="1" fill="#e4e4e4"/><rect x="14" y="10" width="7" height="1" fill="#c8c8c8"/><rect x="21" y="10" width="1" height="1" fill="#a0a0a0"/><rect x="22" y="10" width="1" height="1" fill="#000000"/><rect x="4" y="11" width="2" height="1" fill="#ffffff"/><rect x="6" y="11" width="1" height="1" fill="#e4e4e4"/><rect x="7" y="11" width="3" height="1" fill="#c8c8c8"/><rect x="10" y="11" width="4" height="1" fill="#e4e4e4"/><rect x="14" y="11" width="4" height="1" fill="#c8c8c8"/><rect x="18" y="11" width="4" height="1" fill="#a0a0a0"/><rect x="22" y="11" width="1" height="1" fill="#000000"/><rect x="4" y="12" width="1" height="1" fill="#ffffff"/><rect x="5" y="12" width="1" height="1" fill="#e4e4e4"/><rect x="6" y="12" width="4" height="1" fill="#c8c8c8"/><rect x="10" y="12" width="2" height="1" fill="#ffffff"/><rect x="12" y="12" width="3" height="1" fill="#c8c8c8"/><rect x="15" y="12" width="7" height="1" fill="#a0a0a0"/><rect x="22" y="12" width="1" height="1" fill="#000000"/><rect x="4" y="13" width="2" height="1" fill="#000000"/><rect x="6" y="13" width="6" height="1" fill="#c8c8c8"/><rect x="12" y="13" width="1" height="1" fill="#ffffff"/><rect x="13" y="13" width="1" height="1" fill="#c8c8c8"/><rect x="14" y="13" width="7" height="1" fill="#a0a0a0"/><rect x="21" y="13" width="2" height="1" fill="#000000"/><rect x="4" y="14" width="1" height="1" fill="#ffffff"/><rect x="5" y="14" width="2" height="1" fill="#000000"/><rect x="7" y="14" width="7" height="1" fill="#c8c8c8"/><rect x="14" y="14" width="5" height="1" fill="#a0a0a0"/><rect x="19" y="14" width="2" height="1" fill="#000000"/><rect x="21" y="14" width="1" height="1" fill="#ffffff"/><rect x="5" y="15" width="1" height="1" fill="#000000"/><rect x="6" y="15" width="2" height="1" fill="#ffffff"/><rect x="8" y="15" width="2" height="1" fill="#000000"/><rect x="10" y="15" width="4" height="1" fill="#c8c8c8"/><rect x="14" y="15" width="3" height="1" fill="#a0a0a0"/><rect x="17" y="15" width="2" height="1" fill="#000000"/><rect x="19" y="15" width="1" height="1" fill="#ffffff"/><rect x="20" y="15" width="2" height="1" fill="#000000"/><rect x="6" y="16" width="2" height="1" fill="#000000"/><rect x="8" y="16" width="2" height="1" fill="#ffffff"/><rect x="10" y="16" width="2" height="1" fill="#000000"/><rect x="12" y="16" width="1" height="1" fill="#c8c8c8"/><rect x="13" y="16" width="2" height="1" fill="#a0a0a0"/><rect x="15" y="16" width="2" height="1" fill="#000000"/><rect x="17" y="16" width="2" height="1" fill="#ffffff"/><rect x="19" y="16" width="2" height="1" fill="#000000"/><rect x="8" y="17" width="2" height="1" fill="#000000"/><rect x="10" y="17" width="2" height="1" fill="#ffffff"/><rect x="12" y="17" width="4" height="1" fill="#000000"/><rect x="16" y="17" width="2" height="1" fill="#ffffff"/><rect x="18" y="17" width="2" height="1" fill="#000000"/><rect x="10" y="18" width="2" height="1" fill="#000000"/><rect x="12" y="18" width="4" height="1" fill="#ffffff"/><rect x="16" y="18" width="2" height="1" fill="#000000"/><rect x="12" y="19" width="4" height="1" fill="#000000"/></svg>
<svg style="position:absolute;left:379px;top:211px" width="22" height="21" viewBox="0 0 22 21" shape-rendering="crispEdges"><rect x="6" y="1" width="12" height="2" fill="#505050"/><rect x="6" y="1" width="2" height="15" fill="#505050"/><rect x="16" y="1" width="2" height="15" fill="#505050"/><rect x="8" y="3" width="8" height="12" fill="#e8e8e8"/><rect x="3" y="15" width="18" height="1" fill="#505050"/><path d="M11.5 8L16.5 3.5V15.5L11.5 20Z" fill="#e0a000" stroke="#4a4a5a" shape-rendering="geometricPrecision"/><path d="M13 12.5Q14 11.5 13.5 13.5" stroke="#4a4a5a" fill="none" stroke-width="0.8" shape-rendering="geometricPrecision"/><path d="M1.5 8H6V5.8L10.3 9.5L6 13.2V11H1.5Z" fill="#00dd00" stroke="#603060" stroke-width="0.8" shape-rendering="geometricPrecision"/></svg>
<div style="left:205px;top:235px;width:699px;height:245px;background:#808080;border:1px solid;border-color:#808080 #ffffff #ffffff #808080;box-shadow:inset 1px 1px #404040,inset -1px -1px #d4d0c8;"></div>
<div style="left:207px;top:237px;width:697px;height:18px;background:#0a246a"></div>
<div style="left:207px;top:255px;width:697px;height:1px;background:#000"></div>
<div class="t" style="left:211px;top:241px;color:#fff">pregled podataka</div>
<div style="left:207px;top:256px;width:34px;height:18px;background:#d4d0c8;border-top:1px solid #ffffff;border-left:1px solid #ffffff;box-sizing:border-box"></div>
<div style="left:241px;top:256px;width:1px;height:19px;background:#808080"></div>
<div style="left:207px;top:274px;width:671px;height:1px;background:#808080"></div>
<div style="left:242px;top:256px;width:81px;height:18px;background:#d4d0c8;border-top:1px solid #ffffff;border-left:1px solid #ffffff;box-sizing:border-box"></div>
<div style="left:322px;top:257px;width:1px;height:16px;background:#808080"></div>
<div class="t" style="left:247px;top:259px;">Datum</div>
<div style="left:323px;top:256px;width:80px;height:18px;background:#d4d0c8;border-top:1px solid #ffffff;border-left:1px solid #ffffff;box-sizing:border-box"></div>
<div style="left:402px;top:257px;width:1px;height:16px;background:#808080"></div>
<div class="t" style="left:328px;top:259px;">Uplata/isplata</div>
<div style="left:403px;top:256px;width:75px;height:18px;background:#d4d0c8;border-top:1px solid #ffffff;border-left:1px solid #ffffff;box-sizing:border-box"></div>
<div style="left:477px;top:257px;width:1px;height:16px;background:#808080"></div>
<div class="t" style="left:408px;top:259px;">Broj upl./ispl.</div>
<div style="left:478px;top:256px;width:160px;height:18px;background:#d4d0c8;border-top:1px solid #ffffff;border-left:1px solid #ffffff;box-sizing:border-box"></div>
<div style="left:637px;top:257px;width:1px;height:16px;background:#808080"></div>
<div class="t" style="left:483px;top:259px;">Partner</div>
<div style="left:638px;top:256px;width:160px;height:18px;background:#d4d0c8;border-top:1px solid #ffffff;border-left:1px solid #ffffff;box-sizing:border-box"></div>
<div style="left:797px;top:257px;width:1px;height:16px;background:#808080"></div>
<div class="t" style="left:643px;top:259px;">Naziv uplatitelja/isplatit.</div>
<div style="left:798px;top:256px;width:79px;height:18px;background:#d4d0c8;border-top:1px solid #ffffff;border-left:1px solid #ffffff;box-sizing:border-box"></div>
<div class="t r" style="right:96px;top:259px;text-align:right;">Iznos</div>
<div style="left:207px;top:275px;width:34px;height:16px;background:#d4d0c8;border-top:1px solid #ffffff;border-left:1px solid #ffffff;box-sizing:border-box"></div>
<div style="left:241px;top:275px;width:1px;height:17px;background:#808080"></div>
<div style="left:207px;top:291px;width:35px;height:1px;background:#808080"></div>
<svg style="position:absolute;left:212px;top:279px" width="5" height="9" viewBox="0 0 5 9" shape-rendering="crispEdges"><path d="M0 0L5 4.5L0 9Z" fill="#000" shape-rendering="auto"/></svg>
<div style="left:242px;top:275px;width:636px;height:16px;background:#fff"></div>
<div style="left:242px;top:291px;width:636px;height:1px;background:#d4d0c8"></div>
<div style="left:322px;top:275px;width:1px;height:17px;background:#d4d0c8"></div>
<div class="t" style="left:245px;top:278px;">20.1.2014</div>
<div style="left:402px;top:275px;width:1px;height:17px;background:#d4d0c8"></div>
<div class="t c" style="left:262.5px;width:200px;top:278px;text-align:center;">uplata</div>
<div style="left:477px;top:275px;width:1px;height:17px;background:#d4d0c8"></div>
<div class="t" style="left:406px;top:278px;">1</div>
<div style="left:637px;top:275px;width:1px;height:17px;background:#d4d0c8"></div>
<div style="left:797px;top:275px;width:1px;height:17px;background:#d4d0c8"></div>
<div class="t" style="left:641px;top:278px;">transakcijski račun poduzeća</div>
<div style="left:877px;top:275px;width:1px;height:17px;background:#d4d0c8"></div>
<div class="t r" style="right:96px;top:278px;text-align:right;">10000,00</div>
<svg style="position:absolute;left:235px;top:491px" width="15" height="15" viewBox="0 0 15 15" shape-rendering="crispEdges"><g shape-rendering="geometricPrecision"><circle cx="7.5" cy="7.5" r="7" fill="#fff" stroke="#000" stroke-width="1.1"/></g><rect x="6" y="3" width="3" height="2" fill="#0000ff"/><rect x="6" y="6" width="3" height="5" fill="#0000ff"/><rect x="5" y="6" width="1" height="1" fill="#0000ff"/><rect x="5" y="10" width="5" height="1" fill="#0000ff"/></svg>
<div style="left:280px;top:492px;width:11px;height:11px;background:#fff;border:1px solid;border-color:#808080 #ffffff #ffffff #808080;box-shadow:inset 1px 1px #404040,inset -1px -1px #d4d0c8;"></div>
<svg style="position:absolute;left:283px;top:495px" width="7" height="7" viewBox="0 0 7 7" shape-rendering="crispEdges"><rect x="6" y="0" width="1" height="1" fill="#000"/><rect x="5" y="1" width="1" height="1" fill="#000"/><rect x="6" y="1" width="1" height="1" fill="#000"/><rect x="0" y="2" width="1" height="1" fill="#000"/><rect x="4" y="2" width="1" height="1" fill="#000"/><rect x="5" y="2" width="1" height="1" fill="#000"/><rect x="6" y="2" width="1" height="1" fill="#000"/><rect x="0" y="3" width="1" height="1" fill="#000"/><rect x="1" y="3" width="1" height="1" fill="#000"/><rect x="3" y="3" width="1" height="1" fill="#000"/><rect x="4" y="3" width="1" height="1" fill="#000"/><rect x="5" y="3" width="1" height="1" fill="#000"/><rect x="0" y="4" width="1" height="1" fill="#000"/><rect x="1" y="4" width="1" height="1" fill="#000"/><rect x="2" y="4" width="1" height="1" fill="#000"/><rect x="3" y="4" width="1" height="1" fill="#000"/><rect x="4" y="4" width="1" height="1" fill="#000"/><rect x="1" y="5" width="1" height="1" fill="#000"/><rect x="2" y="5" width="1" height="1" fill="#000"/><rect x="3" y="5" width="1" height="1" fill="#000"/><rect x="2" y="6" width="1" height="1" fill="#000"/></svg>
<div class="t" style="left:299px;top:493px;">Uplata</div>
<div style="left:375px;top:492px;width:11px;height:11px;background:#fff;border:1px solid;border-color:#808080 #ffffff #ffffff #808080;box-shadow:inset 1px 1px #404040,inset -1px -1px #d4d0c8;"></div>
<div class="t" style="left:394px;top:493px;">Isplata</div>
<div class="t" style="left:237px;top:522px;">Broj</div>
<div style="left:280px;top:517px;width:88px;height:18px;background:#d4d0c8;border:1px solid;border-color:#808080 #ffffff #ffffff #808080;box-shadow:inset 1px 1px #404040,inset -1px -1px #d4d0c8;"></div>
<div class="t r" style="right:606px;top:521px;text-align:right;">1</div>
<div class="t" style="left:377px;top:522px;">Datum</div>
<div style="left:425px;top:517px;width:88px;height:18px;background:#d4d0c8;border:1px solid;border-color:#808080 #ffffff #ffffff #808080;box-shadow:inset 1px 1px #404040,inset -1px -1px #d4d0c8;"></div>
<div class="t" style="left:429px;top:522px;color:#808080">20. 1 .2014</div>
<div style="left:497px;top:519px;width:14px;height:14px;background:#d4d0c8;border:1px solid;border-color:#d4d0c8 #404040 #404040 #d4d0c8;box-shadow:inset 1px 1px #ffffff,inset -1px -1px #808080;"></div>
<svg style="position:absolute;left:501px;top:525px" width="8" height="5" viewBox="0 0 8 5" shape-rendering="crispEdges"><path d="M0 0H7L3.5 4Z" fill="#808080" shape-rendering="geometricPrecision"/></svg>
<div class="t" style="left:237px;top:547px;">Iznos</div>
<div style="left:280px;top:542px;width:88px;height:18px;background:#d4d0c8;border:1px solid;border-color:#808080 #ffffff #ffffff #808080;box-shadow:inset 1px 1px #404040,inset -1px -1px #d4d0c8;"></div>
<div class="t r" style="right:606px;top:546px;text-align:right;">10000,00</div>
<div class="t e" style="left:377px;top:547px;">Slovima</div>
<div style="left:425px;top:542px;width:438px;height:18px;background:#d4d0c8;border:1px solid;border-color:#808080 #ffffff #ffffff #808080;box-shadow:inset 1px 1px #404040,inset -1px -1px #d4d0c8;"></div>
<div class="t" style="left:429px;top:546px;">deset tisuća kuna nula lipa</div>
<svg style="position:absolute;left:215px;top:569px" width="15" height="15" viewBox="0 0 15 15" shape-rendering="crispEdges"><g shape-rendering="geometricPrecision"><circle cx="7.5" cy="7.5" r="7" fill="#fff" stroke="#000" stroke-width="1.1"/></g><rect x="6" y="3" width="3" height="2" fill="#0000ff"/><rect x="6" y="6" width="3" height="5" fill="#0000ff"/><rect x="5" y="6" width="1" height="1" fill="#0000ff"/><rect x="5" y="10" width="5" height="1" fill="#0000ff"/></svg>
<div class="t" style="left:237px;top:572px;">Partner</div>
<div style="left:280px;top:567px;width:88px;height:18px;background:#d4d4d4;border:1px solid;border-color:#808080 #ffffff #ffffff #808080;box-shadow:inset 1px 1px #404040,inset -1px -1px #d4d0c8;"></div>
<div style="left:375px;top:567px;width:489px;height:18px;border:1px solid;border-color:#808080 transparent #ffffff #808080;box-shadow:inset 1px 1px #404040;"></div>
<svg style="position:absolute;left:215px;top:594px" width="15" height="15" viewBox="0 0 15 15" shape-rendering="crispEdges"><g shape-rendering="geometricPrecision"><circle cx="7.5" cy="7.5" r="7" fill="#fff" stroke="#000" stroke-width="1.1"/></g><rect x="6" y="3" width="3" height="2" fill="#0000ff"/><rect x="6" y="6" width="3" height="5" fill="#0000ff"/><rect x="5" y="6" width="1" height="1" fill="#0000ff"/><rect x="5" y="10" width="5" height="1" fill="#0000ff"/></svg>
<div class="t" style="left:237px;top:597px;">Naziv uplatitelja/isplatit.</div>
<div style="left:375px;top:592px;width:378px;height:18px;background:#d4d0c8;border:1px solid;border-color:#808080 #ffffff #ffffff #808080;box-shadow:inset 1px 1px #404040,inset -1px -1px #d4d0c8;"></div>
<div class="t" style="left:379px;top:596px;">transakcijski račun poduzeća</div>
<div class="t e" style="left:768px;top:597px;">Trans. račun poduz.</div>
<div class="t" style="left:237px;top:622px;">Konto</div>
<div style="left:280px;top:617px;width:88px;height:18px;background:#d4d4d4;border:1px solid;border-color:#808080 #ffffff #ffffff #808080;box-shadow:inset 1px 1px #404040,inset -1px -1px #d4d0c8;"></div>
<div class="t r" style="right:606px;top:621px;text-align:right;">10001</div>
<div style="left:375px;top:617px;width:488px;height:18px;background:#d4d0c8;border:1px solid;border-color:#808080 #ffffff #ffffff #808080;box-shadow:inset 1px 1px #404040,inset -1px -1px #d4d0c8;"></div>
<div class="t" style="left:379px;top:621px;">Transakcijski račun Zagrebačka banka</div>
<div class="t" style="left:237px;top:648px;">Svrha</div>
<div style="left:280px;top:642px;width:583px;height:53px;background:#d4d0c8;border:1px solid;border-color:#808080 #ffffff #ffffff #808080;box-shadow:inset 1px 1px #404040,inset -1px -1px #d4d0c8;"></div>
<div class="t" style="left:284px;top:646px;">za materijalne troškove</div>
</body></html>
